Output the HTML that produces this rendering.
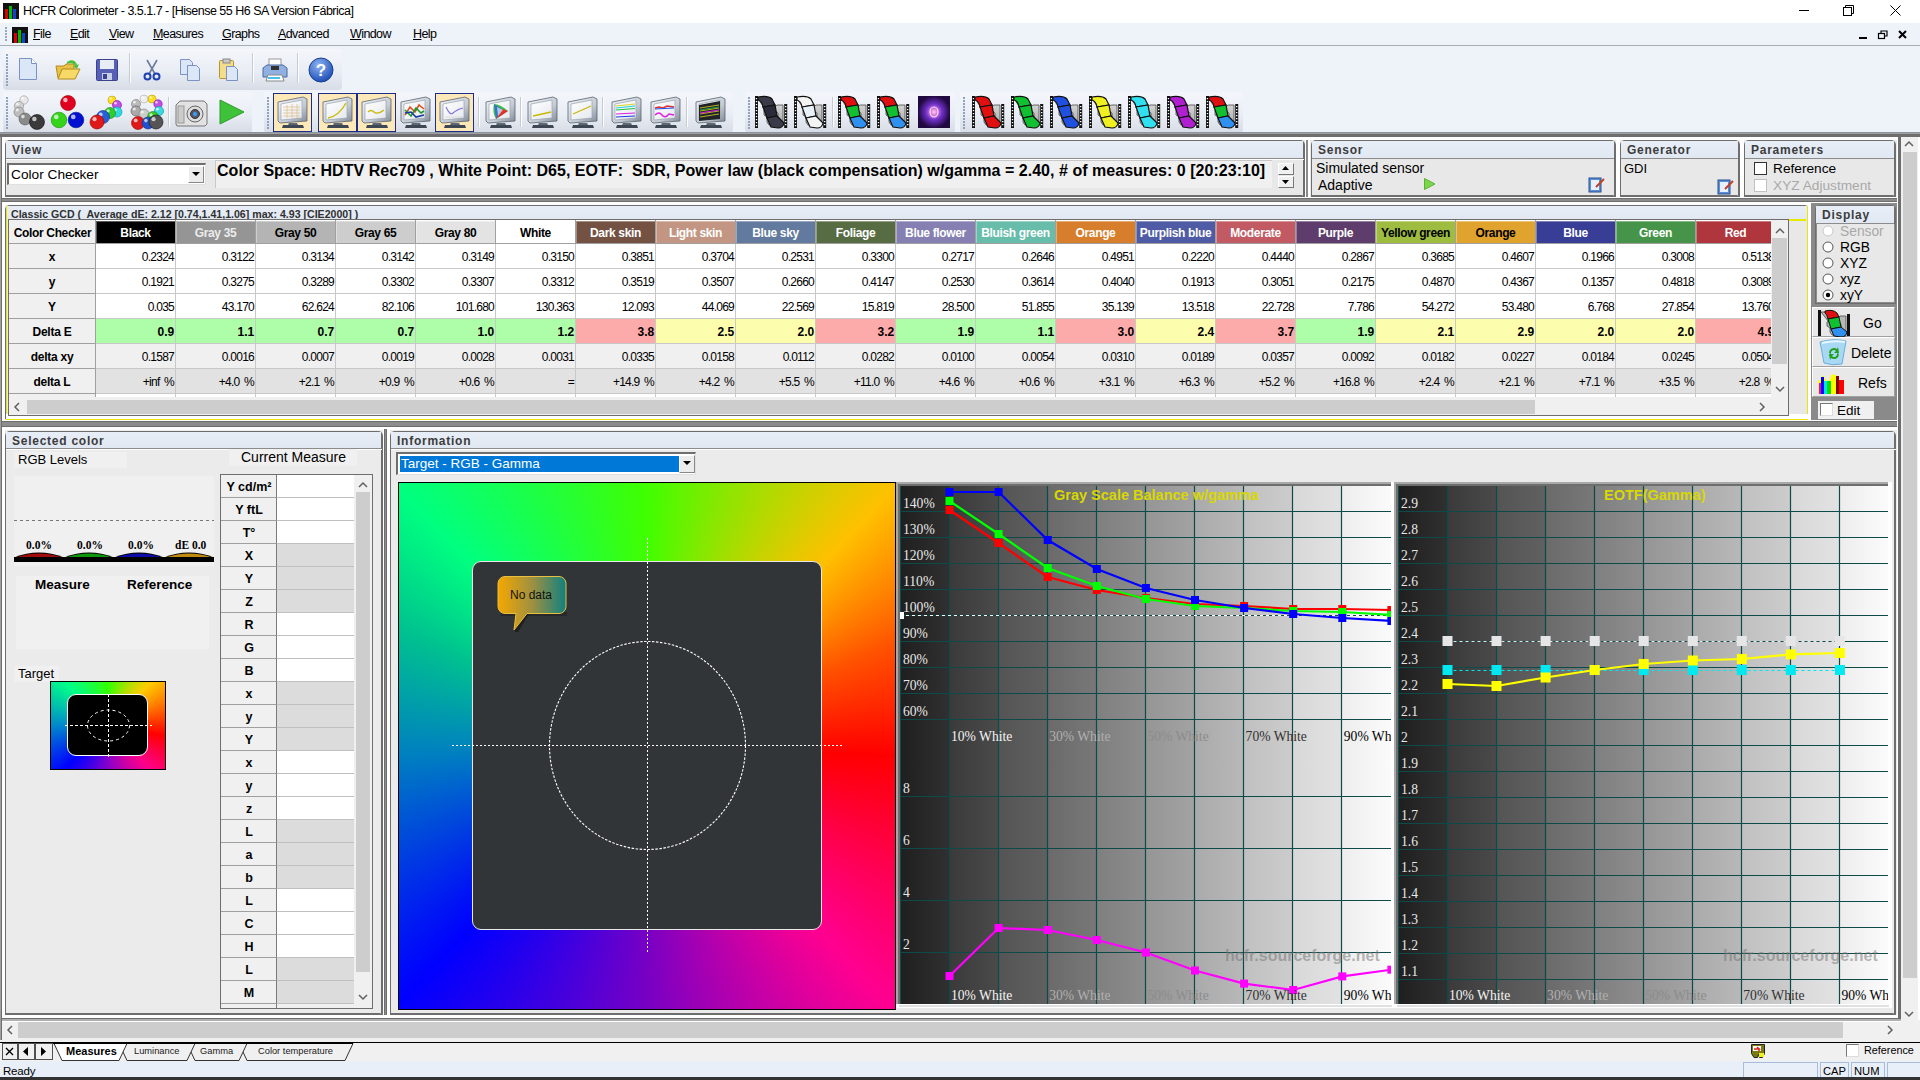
<!DOCTYPE html><html><head><meta charset="utf-8"><style>
*{margin:0;padding:0;box-sizing:border-box}
html,body{width:1920px;height:1080px;overflow:hidden;background:#f0f0f0;font-family:"Liberation Sans",sans-serif;font-size:12px;color:#000}
div{position:absolute}
.t{white-space:nowrap;line-height:1}
svg{position:absolute;overflow:visible}
</style></head><body><div style="left:0px;top:0px;width:1920px;height:23px;background:#fff"></div>
<svg style="left:3px;top:3px" width="16" height="16"><defs><linearGradient id="ig3" x1="0" y1="0" x2="0" y2="1"><stop offset="0" stop-color="#000"/><stop offset="1" stop-color="#333"/></linearGradient></defs><rect x="0" y="0" width="16" height="16" fill="#111"/><rect x="2" y="6" width="3" height="10" fill="#d00"/><rect x="6" y="3" width="3" height="13" fill="#0b0"/><rect x="10" y="6" width="3" height="10" fill="#14c"/></svg>
<div class="t" style="left:23px;top:5px;font-size:12.5px;letter-spacing:-0.5px;color:#000">HCFR Colorimeter - 3.5.1.7 - [Hisense 55 H6 SA Version Fábrica]</div>
<div style="left:1799px;top:10px;width:10px;height:1px;background:#000"></div>
<svg style="left:1843px;top:5px" width="12" height="12"><rect x="0.5" y="2.5" width="8" height="8" fill="none" stroke="#000"/><path d="M2.5 2.5V0.5h8v8h-2" fill="none" stroke="#000"/></svg>
<svg style="left:1890px;top:5px" width="11" height="11"><path d="M0.5 0.5L10.5 10.5M10.5 0.5L0.5 10.5" stroke="#000" stroke-width="1"/></svg>
<div style="left:0px;top:23px;width:1920px;height:22px;background:#eef2f9"></div>
<div style="left:0px;top:45px;width:1920px;height:1px;background:#a9adb3"></div>
<div style="left:5px;top:27px;width:2px;height:2px;background:#9aa6bb"></div>
<div style="left:5px;top:30px;width:2px;height:2px;background:#9aa6bb"></div>
<div style="left:5px;top:33px;width:2px;height:2px;background:#9aa6bb"></div>
<div style="left:5px;top:36px;width:2px;height:2px;background:#9aa6bb"></div>
<div style="left:5px;top:39px;width:2px;height:2px;background:#9aa6bb"></div>
<svg style="left:12px;top:27px" width="16" height="16"><defs><linearGradient id="ig12" x1="0" y1="0" x2="0" y2="1"><stop offset="0" stop-color="#000"/><stop offset="1" stop-color="#333"/></linearGradient></defs><rect x="0" y="0" width="16" height="16" fill="#111"/><rect x="2" y="6" width="3" height="10" fill="#d00"/><rect x="6" y="3" width="3" height="13" fill="#0b0"/><rect x="10" y="6" width="3" height="10" fill="#14c"/></svg>
<div class="t" style="left:33px;top:28px;font-size:12.5px;letter-spacing:-0.6px"><u>F</u>ile</div>
<div class="t" style="left:70px;top:28px;font-size:12.5px;letter-spacing:-0.6px"><u>E</u>dit</div>
<div class="t" style="left:109px;top:28px;font-size:12.5px;letter-spacing:-0.6px"><u>V</u>iew</div>
<div class="t" style="left:153px;top:28px;font-size:12.5px;letter-spacing:-0.6px"><u>M</u>easures</div>
<div class="t" style="left:222px;top:28px;font-size:12.5px;letter-spacing:-0.6px"><u>G</u>raphs</div>
<div class="t" style="left:278px;top:28px;font-size:12.5px;letter-spacing:-0.6px"><u>A</u>dvanced</div>
<div class="t" style="left:350px;top:28px;font-size:12.5px;letter-spacing:-0.6px"><u>W</u>indow</div>
<div class="t" style="left:413px;top:28px;font-size:12.5px;letter-spacing:-0.6px"><u>H</u>elp</div>
<div style="left:1859px;top:37px;width:8px;height:2px;background:#000"></div>
<svg style="left:1878px;top:30px" width="10" height="10"><rect x="0.5" y="3.5" width="6" height="5" fill="none" stroke="#000" stroke-width="1.2"/><path d="M3 3V1h6v5H7" fill="none" stroke="#000" stroke-width="1.2"/></svg>
<svg style="left:1898px;top:30px" width="9" height="9"><path d="M1 1L8 8M8 1L1 8" stroke="#000" stroke-width="2"/></svg>
<div style="left:0px;top:46px;width:1920px;height:87px;background:#eef2f9"></div>
<div style="left:3px;top:49px;width:339px;height:41px;background:linear-gradient(#f4f6fb 0%,#e9edf4 55%,#d7dce6 100%);border-radius:4px"></div>
<div style="left:6px;top:54px;width:2px;height:2px;background:#8ea3c3"></div>
<div style="left:6px;top:57px;width:2px;height:2px;background:#8ea3c3"></div>
<div style="left:6px;top:60px;width:2px;height:2px;background:#8ea3c3"></div>
<div style="left:6px;top:63px;width:2px;height:2px;background:#8ea3c3"></div>
<div style="left:6px;top:66px;width:2px;height:2px;background:#8ea3c3"></div>
<div style="left:6px;top:69px;width:2px;height:2px;background:#8ea3c3"></div>
<div style="left:6px;top:72px;width:2px;height:2px;background:#8ea3c3"></div>
<div style="left:6px;top:75px;width:2px;height:2px;background:#8ea3c3"></div>
<div style="left:6px;top:78px;width:2px;height:2px;background:#8ea3c3"></div>
<div style="left:6px;top:81px;width:2px;height:2px;background:#8ea3c3"></div>
<div style="left:6px;top:84px;width:2px;height:2px;background:#8ea3c3"></div>
<div style="left:3px;top:92px;width:249px;height:41px;background:linear-gradient(#f4f6fb 0%,#e9edf4 55%,#d7dce6 100%);border-radius:4px"></div>
<div style="left:6px;top:97px;width:2px;height:2px;background:#8ea3c3"></div>
<div style="left:6px;top:100px;width:2px;height:2px;background:#8ea3c3"></div>
<div style="left:6px;top:103px;width:2px;height:2px;background:#8ea3c3"></div>
<div style="left:6px;top:106px;width:2px;height:2px;background:#8ea3c3"></div>
<div style="left:6px;top:109px;width:2px;height:2px;background:#8ea3c3"></div>
<div style="left:6px;top:112px;width:2px;height:2px;background:#8ea3c3"></div>
<div style="left:6px;top:115px;width:2px;height:2px;background:#8ea3c3"></div>
<div style="left:6px;top:118px;width:2px;height:2px;background:#8ea3c3"></div>
<div style="left:6px;top:121px;width:2px;height:2px;background:#8ea3c3"></div>
<div style="left:6px;top:124px;width:2px;height:2px;background:#8ea3c3"></div>
<div style="left:6px;top:127px;width:2px;height:2px;background:#8ea3c3"></div>
<div style="left:264px;top:92px;width:469px;height:41px;background:linear-gradient(#f4f6fb 0%,#e9edf4 55%,#d7dce6 100%);border-radius:4px"></div>
<div style="left:267px;top:97px;width:2px;height:2px;background:#8ea3c3"></div>
<div style="left:267px;top:100px;width:2px;height:2px;background:#8ea3c3"></div>
<div style="left:267px;top:103px;width:2px;height:2px;background:#8ea3c3"></div>
<div style="left:267px;top:106px;width:2px;height:2px;background:#8ea3c3"></div>
<div style="left:267px;top:109px;width:2px;height:2px;background:#8ea3c3"></div>
<div style="left:267px;top:112px;width:2px;height:2px;background:#8ea3c3"></div>
<div style="left:267px;top:115px;width:2px;height:2px;background:#8ea3c3"></div>
<div style="left:267px;top:118px;width:2px;height:2px;background:#8ea3c3"></div>
<div style="left:267px;top:121px;width:2px;height:2px;background:#8ea3c3"></div>
<div style="left:267px;top:124px;width:2px;height:2px;background:#8ea3c3"></div>
<div style="left:267px;top:127px;width:2px;height:2px;background:#8ea3c3"></div>
<div style="left:745px;top:92px;width:210px;height:41px;background:linear-gradient(#f4f6fb 0%,#e9edf4 55%,#d7dce6 100%);border-radius:4px"></div>
<div style="left:748px;top:97px;width:2px;height:2px;background:#8ea3c3"></div>
<div style="left:748px;top:100px;width:2px;height:2px;background:#8ea3c3"></div>
<div style="left:748px;top:103px;width:2px;height:2px;background:#8ea3c3"></div>
<div style="left:748px;top:106px;width:2px;height:2px;background:#8ea3c3"></div>
<div style="left:748px;top:109px;width:2px;height:2px;background:#8ea3c3"></div>
<div style="left:748px;top:112px;width:2px;height:2px;background:#8ea3c3"></div>
<div style="left:748px;top:115px;width:2px;height:2px;background:#8ea3c3"></div>
<div style="left:748px;top:118px;width:2px;height:2px;background:#8ea3c3"></div>
<div style="left:748px;top:121px;width:2px;height:2px;background:#8ea3c3"></div>
<div style="left:748px;top:124px;width:2px;height:2px;background:#8ea3c3"></div>
<div style="left:748px;top:127px;width:2px;height:2px;background:#8ea3c3"></div>
<div style="left:960px;top:92px;width:283px;height:41px;background:linear-gradient(#f4f6fb 0%,#e9edf4 55%,#d7dce6 100%);border-radius:4px"></div>
<div style="left:963px;top:97px;width:2px;height:2px;background:#8ea3c3"></div>
<div style="left:963px;top:100px;width:2px;height:2px;background:#8ea3c3"></div>
<div style="left:963px;top:103px;width:2px;height:2px;background:#8ea3c3"></div>
<div style="left:963px;top:106px;width:2px;height:2px;background:#8ea3c3"></div>
<div style="left:963px;top:109px;width:2px;height:2px;background:#8ea3c3"></div>
<div style="left:963px;top:112px;width:2px;height:2px;background:#8ea3c3"></div>
<div style="left:963px;top:115px;width:2px;height:2px;background:#8ea3c3"></div>
<div style="left:963px;top:118px;width:2px;height:2px;background:#8ea3c3"></div>
<div style="left:963px;top:121px;width:2px;height:2px;background:#8ea3c3"></div>
<div style="left:963px;top:124px;width:2px;height:2px;background:#8ea3c3"></div>
<div style="left:963px;top:127px;width:2px;height:2px;background:#8ea3c3"></div>
<svg style="left:18px;top:57px" width="20" height="24"><path d="M1.5 1.5h12l5 5v16h-17z" fill="#dbe6f7" stroke="#7b93c4"/><path d="M13.5 1.5v5h5" fill="#fff" stroke="#7b93c4"/></svg>
<svg style="left:55px;top:58px" width="26" height="24"><path d="M1 8h8l2-2h8v14H3z" fill="#e9c24a" stroke="#b58a1a"/><path d="M3 21l4-10h18l-5 10z" fill="#f7d967" stroke="#b58a1a"/><path d="M12 4c4-3 9-2 10 3l2-1-2 5-4-3 2 0c-1-3-5-4-8-2z" fill="#4fbf3a"/></svg>
<svg style="left:96px;top:59px" width="22" height="22"><rect x="0.5" y="0.5" width="21" height="21" rx="1" fill="#5760b5" stroke="#3b438f"/><rect x="4" y="1" width="14" height="9" fill="#e8ecf4"/><rect x="6" y="14" width="10" height="7" fill="#c8d0e8"/><rect x="7" y="15" width="4" height="5" fill="#3b438f"/></svg>
<div style="left:129px;top:53px;width:1px;height:30px;background:#c5cad3"></div>
<div style="left:130px;top:53px;width:1px;height:30px;background:#fff"></div>
<svg style="left:143px;top:59px" width="18" height="22"><path d="M4 1l8 14M14 1L6 15" stroke="#6d7ba0" stroke-width="1.6"/><circle cx="4.5" cy="17.5" r="3" fill="none" stroke="#1e40b0" stroke-width="2"/><circle cx="13.5" cy="17.5" r="3" fill="none" stroke="#1e40b0" stroke-width="2"/></svg>
<svg style="left:179px;top:58px" width="22" height="24"><path d="M1.5 1.5h9l3 3v12h-12z" fill="#dbe6f7" stroke="#7b93c4"/><path d="M8.5 7.5h9l3 3v12h-12z" fill="#dbe6f7" stroke="#7b93c4"/></svg>
<svg style="left:218px;top:58px" width="22" height="24"><rect x="1.5" y="2.5" width="14" height="18" rx="1" fill="#f3dc8a" stroke="#b8952a"/><rect x="5" y="1" width="7" height="4" fill="#c9c9c9" stroke="#888"/><path d="M8.5 8.5h8l3 3v11h-11z" fill="#dbe6f7" stroke="#7b93c4"/></svg>
<div style="left:252px;top:53px;width:1px;height:30px;background:#c5cad3"></div>
<div style="left:253px;top:53px;width:1px;height:30px;background:#fff"></div>
<svg style="left:262px;top:58px" width="26" height="24"><rect x="7" y="1" width="12" height="8" fill="#fff" stroke="#999"/><path d="M1 10l4-3h16l4 3v9H1z" fill="#8fb0e0" stroke="#4a6aa0"/><rect x="9" y="8" width="8" height="4" fill="#333"/><path d="M6 17h14l2 6H4z" fill="#fff" stroke="#888"/><rect x="6" y="19" width="12" height="2" fill="#4ac0f0"/></svg>
<div style="left:297px;top:53px;width:1px;height:30px;background:#c5cad3"></div>
<div style="left:298px;top:53px;width:1px;height:30px;background:#fff"></div>
<svg style="left:308px;top:57px" width="26" height="26"><defs><radialGradient id="hg" cx="0.4" cy="0.3" r="0.7"><stop offset="0" stop-color="#8fb4f2"/><stop offset="1" stop-color="#1f4fb8"/></radialGradient></defs><circle cx="13" cy="13" r="12" fill="url(#hg)" stroke="#1a3f8f"/><text x="13" y="19" text-anchor="middle" font-family="Liberation Sans" font-weight="bold" font-size="17" fill="#fff">?</text></svg>
<svg style="left:12px;top:95px" width="36" height="36"><circle cx="12" cy="5" r="4.2" fill="#e8e8e8" stroke="#999" stroke-width="0.6"/><circle cx="10.53" cy="3.32" r="1.26" fill="#fff" opacity="0.7"/><circle cx="7" cy="11" r="4.6" fill="#d0d0d0" stroke="#888" stroke-width="0.6"/><circle cx="5.390000000000001" cy="9.16" r="1.38" fill="#fff" opacity="0.7"/><circle cx="7" cy="17" r="5" fill="#bdbdbd" stroke="#777" stroke-width="0.6"/><circle cx="5.25" cy="15.0" r="1.5" fill="#fff" opacity="0.7"/><circle cx="13" cy="24" r="6" fill="#8a8a8a" stroke="#555" stroke-width="0.6"/><circle cx="10.9" cy="21.6" r="1.7999999999999998" fill="#fff" opacity="0.7"/><circle cx="25" cy="27" r="7.5" fill="#3a3a3a" stroke="#111" stroke-width="0.6"/><circle cx="22.375" cy="24.0" r="2.25" fill="#fff" opacity="0.7"/></svg>
<svg style="left:51px;top:95px" width="36" height="36"><circle cx="17" cy="8" r="7.5" fill="#e00020" stroke="#900" stroke-width="0.6"/><circle cx="14.375" cy="5.0" r="2.25" fill="#fff" opacity="0.7"/><circle cx="8" cy="25" r="7.8" fill="#33d41a" stroke="#1a8a10" stroke-width="0.6"/><circle cx="5.27" cy="21.88" r="2.34" fill="#fff" opacity="0.7"/><circle cx="25" cy="25" r="7.8" fill="#0010d0" stroke="#001090" stroke-width="0.6"/><circle cx="22.27" cy="21.88" r="2.34" fill="#fff" opacity="0.7"/></svg>
<svg style="left:90px;top:95px" width="36" height="36"><circle cx="22" cy="5" r="4" fill="#ffe020" stroke="#b90" stroke-width="0.6"/><circle cx="20.6" cy="3.4" r="1.2" fill="#fff" opacity="0.7"/><circle cx="27" cy="10" r="4.5" fill="#c050e0" stroke="#80c" stroke-width="0.6"/><circle cx="25.425" cy="8.2" r="1.3499999999999999" fill="#fff" opacity="0.7"/><circle cx="27" cy="17" r="5" fill="#30d8e0" stroke="#099" stroke-width="0.6"/><circle cx="25.25" cy="15.0" r="1.5" fill="#fff" opacity="0.7"/><circle cx="20" cy="18" r="5.5" fill="#30cc2a" stroke="#181" stroke-width="0.6"/><circle cx="18.075" cy="15.8" r="1.65" fill="#fff" opacity="0.7"/><circle cx="13" cy="22" r="6.5" fill="#2860d8" stroke="#138" stroke-width="0.6"/><circle cx="10.725" cy="19.4" r="1.95" fill="#fff" opacity="0.7"/><circle cx="7" cy="27" r="7" fill="#e01818" stroke="#900" stroke-width="0.6"/><circle cx="4.550000000000001" cy="24.2" r="2.1" fill="#fff" opacity="0.7"/></svg>
<svg style="left:129px;top:95px" width="36" height="36"><circle cx="15" cy="4" r="4" fill="#eee" stroke="#aaa" stroke-width="0.6"/><circle cx="13.6" cy="2.4" r="1.2" fill="#fff" opacity="0.7"/><circle cx="23" cy="4" r="4" fill="#ffe020" stroke="#b90" stroke-width="0.6"/><circle cx="21.6" cy="2.4" r="1.2" fill="#fff" opacity="0.7"/><circle cx="29" cy="9" r="4.2" fill="#c050e0" stroke="#80c" stroke-width="0.6"/><circle cx="27.53" cy="7.32" r="1.26" fill="#fff" opacity="0.7"/><circle cx="7" cy="9" r="4.5" fill="#bbb" stroke="#777" stroke-width="0.6"/><circle cx="5.425" cy="7.2" r="1.3499999999999999" fill="#fff" opacity="0.7"/><circle cx="30" cy="16" r="4.6" fill="#3ed8e0" stroke="#099" stroke-width="0.6"/><circle cx="28.39" cy="14.16" r="1.38" fill="#fff" opacity="0.7"/><circle cx="7" cy="16" r="5" fill="#aaa" stroke="#555" stroke-width="0.6"/><circle cx="5.25" cy="14.0" r="1.5" fill="#fff" opacity="0.7"/><circle cx="15" cy="19" r="5" fill="#ccc" stroke="#777" stroke-width="0.6"/><circle cx="13.25" cy="17.0" r="1.5" fill="#fff" opacity="0.7"/><circle cx="24" cy="22" r="5.5" fill="#3dcc2a" stroke="#181" stroke-width="0.6"/><circle cx="22.075" cy="19.8" r="1.65" fill="#fff" opacity="0.7"/><circle cx="9" cy="28" r="6.5" fill="#e01818" stroke="#900" stroke-width="0.6"/><circle cx="6.725" cy="25.4" r="1.95" fill="#fff" opacity="0.7"/><circle cx="19" cy="28" r="6" fill="#2050d0" stroke="#138" stroke-width="0.6"/><circle cx="16.9" cy="25.6" r="1.7999999999999998" fill="#fff" opacity="0.7"/><circle cx="27" cy="27" r="7" fill="#555" stroke="#111" stroke-width="0.6"/><circle cx="24.55" cy="24.2" r="2.1" fill="#fff" opacity="0.7"/></svg>
<div style="left:168px;top:97px;width:1px;height:30px;background:#c5cad3"></div>
<div style="left:169px;top:97px;width:1px;height:30px;background:#fff"></div>
<svg style="left:174px;top:98px" width="34" height="30"><path d="M2 7l4-4h24l3 3v20l-2 2H3l-1-2z" fill="#e2e2e2" stroke="#777"/><rect x="4" y="8" width="6" height="17" fill="#ccc" stroke="#999"/><circle cx="21" cy="16" r="8" fill="#ddd" stroke="#666"/><circle cx="21" cy="16" r="4.5" fill="#556" stroke="#333"/><circle cx="21" cy="16" r="2" fill="#3aa0ff"/></svg>
<svg style="left:218px;top:98px" width="28" height="28"><path d="M2 2L26 14L2 26z" fill="#3fc23a" stroke="#2d9a2a"/></svg>
<svg width="0" height="0" style="left:0;top:0"><defs><linearGradient id="bez" x1="0" y1="0" x2="1" y2="1"><stop offset="0" stop-color="#f2f4f7"/><stop offset="0.6" stop-color="#c5ccd5"/><stop offset="1" stop-color="#7d8894"/></linearGradient><linearGradient id="scr" x1="0" y1="0" x2="1" y2="1"><stop offset="0" stop-color="#ffffff"/><stop offset="1" stop-color="#e4e8ee"/></linearGradient><linearGradient id="filmg" x1="0" y1="0" x2="0" y2="1"><stop offset="0" stop-color="#e0e0e0"/><stop offset="1" stop-color="#a8a8a8"/></linearGradient></defs></svg>
<div style="left:273px;top:93px;width:39px;height:39px;background:#fde8b8;border:1px solid #1f2d8a"></div>
<svg style="left:276px;top:95px" width="34" height="34"><path d="M2 7L27 2L31 4V26L4 28L2 26z" fill="url(#bez)" stroke="#5a6470" stroke-width="0.8"/><path d="M5 9L26 5V23L5 25z" fill="url(#scr)" stroke="#8e98a4" stroke-width="0.6"/><g transform="translate(0,1)"><path d="M7 11h17M7 14h17M7 17h17M7 20h17M11 9v13M16 8v14M21 8v14" stroke="#e0c090" stroke-width="0.8"/></g><path d="M13 28H21L22 30H12z" fill="#5e6874"/><path d="M7 30H27L28 33H6z" fill="#3e4854"/></svg>
<div style="left:318px;top:93px;width:39px;height:39px;background:#fde8b8;border:1px solid #1f2d8a"></div>
<svg style="left:321px;top:95px" width="34" height="34"><path d="M2 7L27 2L31 4V26L4 28L2 26z" fill="url(#bez)" stroke="#5a6470" stroke-width="0.8"/><path d="M5 9L26 5V23L5 25z" fill="url(#scr)" stroke="#8e98a4" stroke-width="0.6"/><g transform="translate(0,1)"><path d="M7 22Q18 20 25 7" stroke="#c8b800" fill="none" stroke-width="1.3"/></g><path d="M13 28H21L22 30H12z" fill="#5e6874"/><path d="M7 30H27L28 33H6z" fill="#3e4854"/></svg>
<div style="left:357px;top:93px;width:39px;height:39px;background:#fde8b8;border:1px solid #1f2d8a"></div>
<svg style="left:360px;top:95px" width="34" height="34"><path d="M2 7L27 2L31 4V26L4 28L2 26z" fill="url(#bez)" stroke="#5a6470" stroke-width="0.8"/><path d="M5 9L26 5V23L5 25z" fill="url(#scr)" stroke="#8e98a4" stroke-width="0.6"/><g transform="translate(0,1)"><path d="M8 16Q11 13 14 16T24 14" stroke="#c8b800" fill="none" stroke-width="1.3"/></g><path d="M13 28H21L22 30H12z" fill="#5e6874"/><path d="M7 30H27L28 33H6z" fill="#3e4854"/></svg>
<svg style="left:399px;top:95px" width="34" height="34"><path d="M2 7L27 2L31 4V26L4 28L2 26z" fill="url(#bez)" stroke="#5a6470" stroke-width="0.8"/><path d="M5 9L26 5V23L5 25z" fill="url(#scr)" stroke="#8e98a4" stroke-width="0.6"/><g transform="translate(0,1)"><path d="M6 19L11 11L16 16L20 9L25 13" stroke="#e05020" fill="none" stroke-width="1.6"/><path d="M6 14L12 20L17 12L22 17L25 15" stroke="#1a9a2a" fill="none" stroke-width="1.6"/><path d="M6 17L12 16L17 21L25 19" stroke="#1a3aa0" fill="none" stroke-width="1.6"/></g><path d="M13 28H21L22 30H12z" fill="#5e6874"/><path d="M7 30H27L28 33H6z" fill="#3e4854"/></svg>
<div style="left:435px;top:93px;width:39px;height:39px;background:#fde8b8;border:1px solid #1f2d8a"></div>
<svg style="left:438px;top:95px" width="34" height="34"><path d="M2 7L27 2L31 4V26L4 28L2 26z" fill="url(#bez)" stroke="#5a6470" stroke-width="0.8"/><path d="M5 9L26 5V23L5 25z" fill="url(#scr)" stroke="#8e98a4" stroke-width="0.6"/><g transform="translate(0,1)"><path d="M8 11Q12 20 15 17T25 12" stroke="#8070e0" fill="none" stroke-width="1.1"/><path d="M7 21H25" stroke="#ccc" stroke-width="0.6"/></g><path d="M13 28H21L22 30H12z" fill="#5e6874"/><path d="M7 30H27L28 33H6z" fill="#3e4854"/></svg>
<div style="left:478px;top:97px;width:1px;height:30px;background:#c5cad3"></div>
<div style="left:479px;top:97px;width:1px;height:30px;background:#fff"></div>
<svg style="left:484px;top:95px" width="34" height="34"><path d="M2 7L27 2L31 4V26L4 28L2 26z" fill="url(#bez)" stroke="#5a6470" stroke-width="0.8"/><path d="M5 9L26 5V23L5 25z" fill="url(#scr)" stroke="#8e98a4" stroke-width="0.6"/><g transform="translate(0,1)"><path d="M10 8Q8 16 12 23L24 15Q16 8 10 8z" fill="#40c040"/><path d="M12 23L24 15L18 13z" fill="#e03030"/><path d="M10 8L18 13L12 23z" fill="#3060f0" opacity="0.8"/><path d="M13 11L19 14L14 20z" fill="#fff" opacity="0.6"/></g><path d="M13 28H21L22 30H12z" fill="#5e6874"/><path d="M7 30H27L28 33H6z" fill="#3e4854"/></svg>
<div style="left:520px;top:97px;width:1px;height:30px;background:#c5cad3"></div>
<div style="left:521px;top:97px;width:1px;height:30px;background:#fff"></div>
<svg style="left:526px;top:95px" width="34" height="34"><path d="M2 7L27 2L31 4V26L4 28L2 26z" fill="url(#bez)" stroke="#5a6470" stroke-width="0.8"/><path d="M5 9L26 5V23L5 25z" fill="url(#scr)" stroke="#8e98a4" stroke-width="0.6"/><g transform="translate(0,1)"><path d="M7 20L25 16" stroke="#c8b800" stroke-width="1.3"/></g><path d="M13 28H21L22 30H12z" fill="#5e6874"/><path d="M7 30H27L28 33H6z" fill="#3e4854"/></svg>
<svg style="left:566px;top:95px" width="34" height="34"><path d="M2 7L27 2L31 4V26L4 28L2 26z" fill="url(#bez)" stroke="#5a6470" stroke-width="0.8"/><path d="M5 9L26 5V23L5 25z" fill="url(#scr)" stroke="#8e98a4" stroke-width="0.6"/><g transform="translate(0,1)"><path d="M7 18L25 10" stroke="#c8b800" stroke-width="1.3"/></g><path d="M13 28H21L22 30H12z" fill="#5e6874"/><path d="M7 30H27L28 33H6z" fill="#3e4854"/></svg>
<div style="left:602px;top:97px;width:1px;height:30px;background:#c5cad3"></div>
<div style="left:603px;top:97px;width:1px;height:30px;background:#fff"></div>
<svg style="left:610px;top:95px" width="34" height="34"><path d="M2 7L27 2L31 4V26L4 28L2 26z" fill="url(#bez)" stroke="#5a6470" stroke-width="0.8"/><path d="M5 9L26 5V23L5 25z" fill="url(#scr)" stroke="#8e98a4" stroke-width="0.6"/><g transform="translate(0,1)"><path d="M6 10L25 8" stroke="#e0d020" stroke-width="1.2"/><path d="M6 12L25 10" stroke="#20d0e0" stroke-width="1.2"/><path d="M6 14L25 12.5" stroke="#20c040" stroke-width="1.2"/><path d="M6 18L25 17" stroke="#e020e0" stroke-width="1.2"/><path d="M6 21L25 20" stroke="#2040e0" stroke-width="1.2"/></g><path d="M13 28H21L22 30H12z" fill="#5e6874"/><path d="M7 30H27L28 33H6z" fill="#3e4854"/></svg>
<svg style="left:649px;top:95px" width="34" height="34"><path d="M2 7L27 2L31 4V26L4 28L2 26z" fill="url(#bez)" stroke="#5a6470" stroke-width="0.8"/><path d="M5 9L26 5V23L5 25z" fill="url(#scr)" stroke="#8e98a4" stroke-width="0.6"/><g transform="translate(0,1)"><path d="M6 12L10 11L14 12L18 10L25 11" stroke="#e03030" fill="none" stroke-width="1.5"/><path d="M6 13L25 12" stroke="#2050f0" stroke-width="1.2"/><path d="M6 19Q10 15 13 19T20 18L25 19" stroke="#e020e0" fill="none" stroke-width="1.4"/></g><path d="M13 28H21L22 30H12z" fill="#5e6874"/><path d="M7 30H27L28 33H6z" fill="#3e4854"/></svg>
<div style="left:686px;top:97px;width:1px;height:30px;background:#c5cad3"></div>
<div style="left:687px;top:97px;width:1px;height:30px;background:#fff"></div>
<svg style="left:694px;top:95px" width="34" height="34"><path d="M2 7L27 2L31 4V26L4 28L2 26z" fill="url(#bez)" stroke="#5a6470" stroke-width="0.8"/><path d="M5 9L26 5V23L5 25z" fill="url(#scr)" stroke="#8e98a4" stroke-width="0.6"/><g transform="translate(0,1)"><path d="M5 9L26 5V23L5 25z" fill="#202428"/><path d="M6 12L25 9M6 15L25 12M6 18L25 15M6 21L25 18" stroke="#c8c020" stroke-width="0.9"/><path d="M6 17L25 14" stroke="#e020e0" stroke-width="1"/><path d="M6 14L25 11" stroke="#20a040" stroke-width="1"/></g><path d="M13 28H21L22 30H12z" fill="#5e6874"/><path d="M7 30H27L28 33H6z" fill="#3e4854"/></svg>
<svg style="left:755px;top:96px" width="33" height="33"><rect x="0" y="0" width="3" height="32" fill="#111"/><rect x="0.8" y="2" width="1.4" height="1.2" fill="#fff"/><rect x="0.8" y="5" width="1.4" height="1.2" fill="#fff"/><rect x="0.8" y="8" width="1.4" height="1.2" fill="#fff"/><rect x="0.8" y="11" width="1.4" height="1.2" fill="#fff"/><rect x="0.8" y="14" width="1.4" height="1.2" fill="#fff"/><rect x="0.8" y="17" width="1.4" height="1.2" fill="#fff"/><rect x="0.8" y="20" width="1.4" height="1.2" fill="#fff"/><rect x="0.8" y="23" width="1.4" height="1.2" fill="#fff"/><rect x="0.8" y="26" width="1.4" height="1.2" fill="#fff"/><rect x="0.8" y="29" width="1.4" height="1.2" fill="#fff"/><rect x="29.2" y="8" width="3" height="24" fill="#111"/><rect x="30" y="10" width="1.4" height="1.2" fill="#fff"/><rect x="30" y="13" width="1.4" height="1.2" fill="#fff"/><rect x="30" y="16" width="1.4" height="1.2" fill="#fff"/><rect x="30" y="19" width="1.4" height="1.2" fill="#fff"/><rect x="30" y="22" width="1.4" height="1.2" fill="#fff"/><rect x="30" y="25" width="1.4" height="1.2" fill="#fff"/><rect x="30" y="28" width="1.4" height="1.2" fill="#fff"/><path d="M3 3H10L12 6V12L9 14V19L12 21V26L14 29L28 30V9H22L20 11V15L23 17V22L18 24Z" fill="url(#filmg)" stroke="#333" stroke-width="0.7"/><path d="M3 1Q13 -1 17 3L20 9L8 11Q7 5 3 4Z" fill="#3a3a48" stroke="#111" stroke-width="1.2"/><path d="M8 11L20 9L22 20L12 22Z" fill="#2a2a38" stroke="#111" stroke-width="1.2"/><path d="M12 22L22 20L29 27Q28 32 23 32L16 31Z" fill="#3a3a48" stroke="#111" stroke-width="1.2"/></svg>
<svg style="left:794px;top:96px" width="33" height="33"><rect x="0" y="0" width="3" height="32" fill="#111"/><rect x="0.8" y="2" width="1.4" height="1.2" fill="#fff"/><rect x="0.8" y="5" width="1.4" height="1.2" fill="#fff"/><rect x="0.8" y="8" width="1.4" height="1.2" fill="#fff"/><rect x="0.8" y="11" width="1.4" height="1.2" fill="#fff"/><rect x="0.8" y="14" width="1.4" height="1.2" fill="#fff"/><rect x="0.8" y="17" width="1.4" height="1.2" fill="#fff"/><rect x="0.8" y="20" width="1.4" height="1.2" fill="#fff"/><rect x="0.8" y="23" width="1.4" height="1.2" fill="#fff"/><rect x="0.8" y="26" width="1.4" height="1.2" fill="#fff"/><rect x="0.8" y="29" width="1.4" height="1.2" fill="#fff"/><rect x="29.2" y="8" width="3" height="24" fill="#111"/><rect x="30" y="10" width="1.4" height="1.2" fill="#fff"/><rect x="30" y="13" width="1.4" height="1.2" fill="#fff"/><rect x="30" y="16" width="1.4" height="1.2" fill="#fff"/><rect x="30" y="19" width="1.4" height="1.2" fill="#fff"/><rect x="30" y="22" width="1.4" height="1.2" fill="#fff"/><rect x="30" y="25" width="1.4" height="1.2" fill="#fff"/><rect x="30" y="28" width="1.4" height="1.2" fill="#fff"/><path d="M3 3H10L12 6V12L9 14V19L12 21V26L14 29L28 30V9H22L20 11V15L23 17V22L18 24Z" fill="url(#filmg)" stroke="#333" stroke-width="0.7"/><path d="M3 1Q13 -1 17 3L20 9L8 11Q7 5 3 4Z" fill="#f4f4f4" stroke="#111" stroke-width="1.2"/><path d="M8 11L20 9L22 20L12 22Z" fill="#e8f0f8" stroke="#111" stroke-width="1.2"/><path d="M12 22L22 20L29 27Q28 32 23 32L16 31Z" fill="#f4f4f4" stroke="#111" stroke-width="1.2"/></svg>
<div style="left:832px;top:97px;width:1px;height:30px;background:#c5cad3"></div>
<div style="left:833px;top:97px;width:1px;height:30px;background:#fff"></div>
<svg style="left:838px;top:96px" width="33" height="33"><rect x="0" y="0" width="3" height="32" fill="#111"/><rect x="0.8" y="2" width="1.4" height="1.2" fill="#fff"/><rect x="0.8" y="5" width="1.4" height="1.2" fill="#fff"/><rect x="0.8" y="8" width="1.4" height="1.2" fill="#fff"/><rect x="0.8" y="11" width="1.4" height="1.2" fill="#fff"/><rect x="0.8" y="14" width="1.4" height="1.2" fill="#fff"/><rect x="0.8" y="17" width="1.4" height="1.2" fill="#fff"/><rect x="0.8" y="20" width="1.4" height="1.2" fill="#fff"/><rect x="0.8" y="23" width="1.4" height="1.2" fill="#fff"/><rect x="0.8" y="26" width="1.4" height="1.2" fill="#fff"/><rect x="0.8" y="29" width="1.4" height="1.2" fill="#fff"/><rect x="29.2" y="8" width="3" height="24" fill="#111"/><rect x="30" y="10" width="1.4" height="1.2" fill="#fff"/><rect x="30" y="13" width="1.4" height="1.2" fill="#fff"/><rect x="30" y="16" width="1.4" height="1.2" fill="#fff"/><rect x="30" y="19" width="1.4" height="1.2" fill="#fff"/><rect x="30" y="22" width="1.4" height="1.2" fill="#fff"/><rect x="30" y="25" width="1.4" height="1.2" fill="#fff"/><rect x="30" y="28" width="1.4" height="1.2" fill="#fff"/><path d="M3 3H10L12 6V12L9 14V19L12 21V26L14 29L28 30V9H22L20 11V15L23 17V22L18 24Z" fill="url(#filmg)" stroke="#333" stroke-width="0.7"/><path d="M3 1Q13 -1 17 3L20 9L8 11Q7 5 3 4Z" fill="#e01010" stroke="#111" stroke-width="1.2"/><path d="M8 11L20 9L22 20L12 22Z" fill="#10c030" stroke="#111" stroke-width="1.2"/><path d="M12 22L22 20L29 27Q28 32 23 32L16 31Z" fill="#3090f0" stroke="#111" stroke-width="1.2"/></svg>
<svg style="left:877px;top:96px" width="33" height="33"><rect x="0" y="0" width="3" height="32" fill="#111"/><rect x="0.8" y="2" width="1.4" height="1.2" fill="#fff"/><rect x="0.8" y="5" width="1.4" height="1.2" fill="#fff"/><rect x="0.8" y="8" width="1.4" height="1.2" fill="#fff"/><rect x="0.8" y="11" width="1.4" height="1.2" fill="#fff"/><rect x="0.8" y="14" width="1.4" height="1.2" fill="#fff"/><rect x="0.8" y="17" width="1.4" height="1.2" fill="#fff"/><rect x="0.8" y="20" width="1.4" height="1.2" fill="#fff"/><rect x="0.8" y="23" width="1.4" height="1.2" fill="#fff"/><rect x="0.8" y="26" width="1.4" height="1.2" fill="#fff"/><rect x="0.8" y="29" width="1.4" height="1.2" fill="#fff"/><rect x="29.2" y="8" width="3" height="24" fill="#111"/><rect x="30" y="10" width="1.4" height="1.2" fill="#fff"/><rect x="30" y="13" width="1.4" height="1.2" fill="#fff"/><rect x="30" y="16" width="1.4" height="1.2" fill="#fff"/><rect x="30" y="19" width="1.4" height="1.2" fill="#fff"/><rect x="30" y="22" width="1.4" height="1.2" fill="#fff"/><rect x="30" y="25" width="1.4" height="1.2" fill="#fff"/><rect x="30" y="28" width="1.4" height="1.2" fill="#fff"/><path d="M3 3H10L12 6V12L9 14V19L12 21V26L14 29L28 30V9H22L20 11V15L23 17V22L18 24Z" fill="url(#filmg)" stroke="#333" stroke-width="0.7"/><path d="M3 1Q13 -1 17 3L20 9L8 11Q7 5 3 4Z" fill="#e01010" stroke="#111" stroke-width="1.2"/><path d="M8 11L20 9L22 20L12 22Z" fill="#10c030" stroke="#111" stroke-width="1.2"/><path d="M12 22L22 20L29 27Q28 32 23 32L16 31Z" fill="#3090f0" stroke="#111" stroke-width="1.2"/></svg>
<svg style="left:918px;top:96px" width="32" height="32"><defs><radialGradient id="pg"><stop offset="0" stop-color="#ffd0f0"/><stop offset="0.18" stop-color="#e080e0"/><stop offset="0.5" stop-color="#7030c8"/><stop offset="1" stop-color="#200840"/></radialGradient></defs><rect width="32" height="32" fill="url(#pg)"/><ellipse cx="16" cy="16" rx="4" ry="5" fill="none" stroke="#fff" stroke-width="1.2" opacity="0.8"/></svg>
<svg style="left:972px;top:96px" width="33" height="33"><rect x="0" y="0" width="3" height="32" fill="#111"/><rect x="0.8" y="2" width="1.4" height="1.2" fill="#fff"/><rect x="0.8" y="5" width="1.4" height="1.2" fill="#fff"/><rect x="0.8" y="8" width="1.4" height="1.2" fill="#fff"/><rect x="0.8" y="11" width="1.4" height="1.2" fill="#fff"/><rect x="0.8" y="14" width="1.4" height="1.2" fill="#fff"/><rect x="0.8" y="17" width="1.4" height="1.2" fill="#fff"/><rect x="0.8" y="20" width="1.4" height="1.2" fill="#fff"/><rect x="0.8" y="23" width="1.4" height="1.2" fill="#fff"/><rect x="0.8" y="26" width="1.4" height="1.2" fill="#fff"/><rect x="0.8" y="29" width="1.4" height="1.2" fill="#fff"/><rect x="29.2" y="8" width="3" height="24" fill="#111"/><rect x="30" y="10" width="1.4" height="1.2" fill="#fff"/><rect x="30" y="13" width="1.4" height="1.2" fill="#fff"/><rect x="30" y="16" width="1.4" height="1.2" fill="#fff"/><rect x="30" y="19" width="1.4" height="1.2" fill="#fff"/><rect x="30" y="22" width="1.4" height="1.2" fill="#fff"/><rect x="30" y="25" width="1.4" height="1.2" fill="#fff"/><rect x="30" y="28" width="1.4" height="1.2" fill="#fff"/><path d="M3 3H10L12 6V12L9 14V19L12 21V26L14 29L28 30V9H22L20 11V15L23 17V22L18 24Z" fill="url(#filmg)" stroke="#333" stroke-width="0.7"/><path d="M3 1Q13 -1 17 3L20 9L8 11Q7 5 3 4Z" fill="#e01010" stroke="#111" stroke-width="1.2"/><path d="M8 11L20 9L22 20L12 22Z" fill="#e01010" stroke="#111" stroke-width="1.2"/><path d="M12 22L22 20L29 27Q28 32 23 32L16 31Z" fill="#e01010" stroke="#111" stroke-width="1.2"/></svg>
<svg style="left:1011px;top:96px" width="33" height="33"><rect x="0" y="0" width="3" height="32" fill="#111"/><rect x="0.8" y="2" width="1.4" height="1.2" fill="#fff"/><rect x="0.8" y="5" width="1.4" height="1.2" fill="#fff"/><rect x="0.8" y="8" width="1.4" height="1.2" fill="#fff"/><rect x="0.8" y="11" width="1.4" height="1.2" fill="#fff"/><rect x="0.8" y="14" width="1.4" height="1.2" fill="#fff"/><rect x="0.8" y="17" width="1.4" height="1.2" fill="#fff"/><rect x="0.8" y="20" width="1.4" height="1.2" fill="#fff"/><rect x="0.8" y="23" width="1.4" height="1.2" fill="#fff"/><rect x="0.8" y="26" width="1.4" height="1.2" fill="#fff"/><rect x="0.8" y="29" width="1.4" height="1.2" fill="#fff"/><rect x="29.2" y="8" width="3" height="24" fill="#111"/><rect x="30" y="10" width="1.4" height="1.2" fill="#fff"/><rect x="30" y="13" width="1.4" height="1.2" fill="#fff"/><rect x="30" y="16" width="1.4" height="1.2" fill="#fff"/><rect x="30" y="19" width="1.4" height="1.2" fill="#fff"/><rect x="30" y="22" width="1.4" height="1.2" fill="#fff"/><rect x="30" y="25" width="1.4" height="1.2" fill="#fff"/><rect x="30" y="28" width="1.4" height="1.2" fill="#fff"/><path d="M3 3H10L12 6V12L9 14V19L12 21V26L14 29L28 30V9H22L20 11V15L23 17V22L18 24Z" fill="url(#filmg)" stroke="#333" stroke-width="0.7"/><path d="M3 1Q13 -1 17 3L20 9L8 11Q7 5 3 4Z" fill="#10c030" stroke="#111" stroke-width="1.2"/><path d="M8 11L20 9L22 20L12 22Z" fill="#10c030" stroke="#111" stroke-width="1.2"/><path d="M12 22L22 20L29 27Q28 32 23 32L16 31Z" fill="#10c030" stroke="#111" stroke-width="1.2"/></svg>
<svg style="left:1050px;top:96px" width="33" height="33"><rect x="0" y="0" width="3" height="32" fill="#111"/><rect x="0.8" y="2" width="1.4" height="1.2" fill="#fff"/><rect x="0.8" y="5" width="1.4" height="1.2" fill="#fff"/><rect x="0.8" y="8" width="1.4" height="1.2" fill="#fff"/><rect x="0.8" y="11" width="1.4" height="1.2" fill="#fff"/><rect x="0.8" y="14" width="1.4" height="1.2" fill="#fff"/><rect x="0.8" y="17" width="1.4" height="1.2" fill="#fff"/><rect x="0.8" y="20" width="1.4" height="1.2" fill="#fff"/><rect x="0.8" y="23" width="1.4" height="1.2" fill="#fff"/><rect x="0.8" y="26" width="1.4" height="1.2" fill="#fff"/><rect x="0.8" y="29" width="1.4" height="1.2" fill="#fff"/><rect x="29.2" y="8" width="3" height="24" fill="#111"/><rect x="30" y="10" width="1.4" height="1.2" fill="#fff"/><rect x="30" y="13" width="1.4" height="1.2" fill="#fff"/><rect x="30" y="16" width="1.4" height="1.2" fill="#fff"/><rect x="30" y="19" width="1.4" height="1.2" fill="#fff"/><rect x="30" y="22" width="1.4" height="1.2" fill="#fff"/><rect x="30" y="25" width="1.4" height="1.2" fill="#fff"/><rect x="30" y="28" width="1.4" height="1.2" fill="#fff"/><path d="M3 3H10L12 6V12L9 14V19L12 21V26L14 29L28 30V9H22L20 11V15L23 17V22L18 24Z" fill="url(#filmg)" stroke="#333" stroke-width="0.7"/><path d="M3 1Q13 -1 17 3L20 9L8 11Q7 5 3 4Z" fill="#2050e0" stroke="#111" stroke-width="1.2"/><path d="M8 11L20 9L22 20L12 22Z" fill="#2050e0" stroke="#111" stroke-width="1.2"/><path d="M12 22L22 20L29 27Q28 32 23 32L16 31Z" fill="#2050e0" stroke="#111" stroke-width="1.2"/></svg>
<svg style="left:1089px;top:96px" width="33" height="33"><rect x="0" y="0" width="3" height="32" fill="#111"/><rect x="0.8" y="2" width="1.4" height="1.2" fill="#fff"/><rect x="0.8" y="5" width="1.4" height="1.2" fill="#fff"/><rect x="0.8" y="8" width="1.4" height="1.2" fill="#fff"/><rect x="0.8" y="11" width="1.4" height="1.2" fill="#fff"/><rect x="0.8" y="14" width="1.4" height="1.2" fill="#fff"/><rect x="0.8" y="17" width="1.4" height="1.2" fill="#fff"/><rect x="0.8" y="20" width="1.4" height="1.2" fill="#fff"/><rect x="0.8" y="23" width="1.4" height="1.2" fill="#fff"/><rect x="0.8" y="26" width="1.4" height="1.2" fill="#fff"/><rect x="0.8" y="29" width="1.4" height="1.2" fill="#fff"/><rect x="29.2" y="8" width="3" height="24" fill="#111"/><rect x="30" y="10" width="1.4" height="1.2" fill="#fff"/><rect x="30" y="13" width="1.4" height="1.2" fill="#fff"/><rect x="30" y="16" width="1.4" height="1.2" fill="#fff"/><rect x="30" y="19" width="1.4" height="1.2" fill="#fff"/><rect x="30" y="22" width="1.4" height="1.2" fill="#fff"/><rect x="30" y="25" width="1.4" height="1.2" fill="#fff"/><rect x="30" y="28" width="1.4" height="1.2" fill="#fff"/><path d="M3 3H10L12 6V12L9 14V19L12 21V26L14 29L28 30V9H22L20 11V15L23 17V22L18 24Z" fill="url(#filmg)" stroke="#333" stroke-width="0.7"/><path d="M3 1Q13 -1 17 3L20 9L8 11Q7 5 3 4Z" fill="#f0f020" stroke="#111" stroke-width="1.2"/><path d="M8 11L20 9L22 20L12 22Z" fill="#f0f020" stroke="#111" stroke-width="1.2"/><path d="M12 22L22 20L29 27Q28 32 23 32L16 31Z" fill="#f0f020" stroke="#111" stroke-width="1.2"/></svg>
<svg style="left:1128px;top:96px" width="33" height="33"><rect x="0" y="0" width="3" height="32" fill="#111"/><rect x="0.8" y="2" width="1.4" height="1.2" fill="#fff"/><rect x="0.8" y="5" width="1.4" height="1.2" fill="#fff"/><rect x="0.8" y="8" width="1.4" height="1.2" fill="#fff"/><rect x="0.8" y="11" width="1.4" height="1.2" fill="#fff"/><rect x="0.8" y="14" width="1.4" height="1.2" fill="#fff"/><rect x="0.8" y="17" width="1.4" height="1.2" fill="#fff"/><rect x="0.8" y="20" width="1.4" height="1.2" fill="#fff"/><rect x="0.8" y="23" width="1.4" height="1.2" fill="#fff"/><rect x="0.8" y="26" width="1.4" height="1.2" fill="#fff"/><rect x="0.8" y="29" width="1.4" height="1.2" fill="#fff"/><rect x="29.2" y="8" width="3" height="24" fill="#111"/><rect x="30" y="10" width="1.4" height="1.2" fill="#fff"/><rect x="30" y="13" width="1.4" height="1.2" fill="#fff"/><rect x="30" y="16" width="1.4" height="1.2" fill="#fff"/><rect x="30" y="19" width="1.4" height="1.2" fill="#fff"/><rect x="30" y="22" width="1.4" height="1.2" fill="#fff"/><rect x="30" y="25" width="1.4" height="1.2" fill="#fff"/><rect x="30" y="28" width="1.4" height="1.2" fill="#fff"/><path d="M3 3H10L12 6V12L9 14V19L12 21V26L14 29L28 30V9H22L20 11V15L23 17V22L18 24Z" fill="url(#filmg)" stroke="#333" stroke-width="0.7"/><path d="M3 1Q13 -1 17 3L20 9L8 11Q7 5 3 4Z" fill="#30e0f0" stroke="#111" stroke-width="1.2"/><path d="M8 11L20 9L22 20L12 22Z" fill="#30e0f0" stroke="#111" stroke-width="1.2"/><path d="M12 22L22 20L29 27Q28 32 23 32L16 31Z" fill="#30e0f0" stroke="#111" stroke-width="1.2"/></svg>
<svg style="left:1167px;top:96px" width="33" height="33"><rect x="0" y="0" width="3" height="32" fill="#111"/><rect x="0.8" y="2" width="1.4" height="1.2" fill="#fff"/><rect x="0.8" y="5" width="1.4" height="1.2" fill="#fff"/><rect x="0.8" y="8" width="1.4" height="1.2" fill="#fff"/><rect x="0.8" y="11" width="1.4" height="1.2" fill="#fff"/><rect x="0.8" y="14" width="1.4" height="1.2" fill="#fff"/><rect x="0.8" y="17" width="1.4" height="1.2" fill="#fff"/><rect x="0.8" y="20" width="1.4" height="1.2" fill="#fff"/><rect x="0.8" y="23" width="1.4" height="1.2" fill="#fff"/><rect x="0.8" y="26" width="1.4" height="1.2" fill="#fff"/><rect x="0.8" y="29" width="1.4" height="1.2" fill="#fff"/><rect x="29.2" y="8" width="3" height="24" fill="#111"/><rect x="30" y="10" width="1.4" height="1.2" fill="#fff"/><rect x="30" y="13" width="1.4" height="1.2" fill="#fff"/><rect x="30" y="16" width="1.4" height="1.2" fill="#fff"/><rect x="30" y="19" width="1.4" height="1.2" fill="#fff"/><rect x="30" y="22" width="1.4" height="1.2" fill="#fff"/><rect x="30" y="25" width="1.4" height="1.2" fill="#fff"/><rect x="30" y="28" width="1.4" height="1.2" fill="#fff"/><path d="M3 3H10L12 6V12L9 14V19L12 21V26L14 29L28 30V9H22L20 11V15L23 17V22L18 24Z" fill="url(#filmg)" stroke="#333" stroke-width="0.7"/><path d="M3 1Q13 -1 17 3L20 9L8 11Q7 5 3 4Z" fill="#b020d0" stroke="#111" stroke-width="1.2"/><path d="M8 11L20 9L22 20L12 22Z" fill="#b020d0" stroke="#111" stroke-width="1.2"/><path d="M12 22L22 20L29 27Q28 32 23 32L16 31Z" fill="#b020d0" stroke="#111" stroke-width="1.2"/></svg>
<svg style="left:1206px;top:96px" width="33" height="33"><rect x="0" y="0" width="3" height="32" fill="#111"/><rect x="0.8" y="2" width="1.4" height="1.2" fill="#fff"/><rect x="0.8" y="5" width="1.4" height="1.2" fill="#fff"/><rect x="0.8" y="8" width="1.4" height="1.2" fill="#fff"/><rect x="0.8" y="11" width="1.4" height="1.2" fill="#fff"/><rect x="0.8" y="14" width="1.4" height="1.2" fill="#fff"/><rect x="0.8" y="17" width="1.4" height="1.2" fill="#fff"/><rect x="0.8" y="20" width="1.4" height="1.2" fill="#fff"/><rect x="0.8" y="23" width="1.4" height="1.2" fill="#fff"/><rect x="0.8" y="26" width="1.4" height="1.2" fill="#fff"/><rect x="0.8" y="29" width="1.4" height="1.2" fill="#fff"/><rect x="29.2" y="8" width="3" height="24" fill="#111"/><rect x="30" y="10" width="1.4" height="1.2" fill="#fff"/><rect x="30" y="13" width="1.4" height="1.2" fill="#fff"/><rect x="30" y="16" width="1.4" height="1.2" fill="#fff"/><rect x="30" y="19" width="1.4" height="1.2" fill="#fff"/><rect x="30" y="22" width="1.4" height="1.2" fill="#fff"/><rect x="30" y="25" width="1.4" height="1.2" fill="#fff"/><rect x="30" y="28" width="1.4" height="1.2" fill="#fff"/><path d="M3 3H10L12 6V12L9 14V19L12 21V26L14 29L28 30V9H22L20 11V15L23 17V22L18 24Z" fill="url(#filmg)" stroke="#333" stroke-width="0.7"/><path d="M3 1Q13 -1 17 3L20 9L8 11Q7 5 3 4Z" fill="#e01010" stroke="#111" stroke-width="1.2"/><path d="M8 11L20 9L22 20L12 22Z" fill="#10c030" stroke="#111" stroke-width="1.2"/><path d="M12 22L22 20L29 27Q28 32 23 32L16 31Z" fill="#3090f0" stroke="#111" stroke-width="1.2"/></svg>
<div style="left:0px;top:132px;width:1920px;height:1px;background:#8c93a0"></div>
<div style="left:0px;top:133px;width:1920px;height:1px;background:#a0a0a0"></div>
<div style="left:0px;top:134px;width:1920px;height:3px;background:#6e6e6e"></div>
<div style="left:0px;top:137px;width:1920px;height:883px;background:#ebebeb"></div>
<div style="left:0px;top:137px;width:1px;height:883px;background:#a0a0a0"></div>
<div style="left:1px;top:137px;width:1px;height:883px;background:#6e6e6e"></div>
<div style="left:2px;top:137px;width:3px;height:883px;background:#fff"></div>
<div style="left:1897px;top:137px;width:23px;height:883px;background:#f0f0f0"></div>
<div style="left:1897px;top:137px;width:1px;height:883px;background:#fff"></div>
<div style="left:1898px;top:137px;width:3px;height:883px;background:#6e6e6e"></div>
<div style="left:1918px;top:137px;width:2px;height:883px;background:#fff"></div>
<div style="left:1903px;top:152px;width:14px;height:826px;background:#cdcdcd"></div>
<svg style="left:1904px;top:140px" width="10" height="8"><path d="M1 6L5 2L9 6" fill="none" stroke="#606060" stroke-width="1.5"/></svg>
<svg style="left:1904px;top:1010px" width="10" height="8"><path d="M1 2L5 6L9 2" fill="none" stroke="#606060" stroke-width="1.5"/></svg>
<div style="left:2px;top:137px;width:1895px;height:3px;background:#fff"></div>
<div style="left:5px;top:140px;width:1300px;height:57px;background:#6e6e6e;border-radius:5px 5px 0 0"></div>
<div style="left:1302px;top:143px;width:1px;height:53px;background:#9a9a9a"></div>
<div style="left:6px;top:141px;width:1297px;height:54px;background:#e8e8e8"></div>
<div style="left:6px;top:141px;width:1297px;height:17px;background:linear-gradient(#e8eef8,#e1e8f2);border-radius:4px 4px 0 0"></div>
<div style="left:6px;top:158px;width:1297px;height:1px;background:#8c8c8c"></div>
<div class="t" style="left:12px;top:144px;font-weight:bold;font-size:12px;color:#3c3c3c;letter-spacing:0.75px">View</div>
<div style="left:6px;top:159px;width:1298px;height:1px;background:#fff"></div>
<div style="left:7px;top:163px;width:199px;height:22px;background:#fff;border-top:2px solid #6e6e6e;border-left:2px solid #6e6e6e;border-right:1px solid #e0e0e0;border-bottom:1px solid #e0e0e0"></div>
<div class="t" style="left:11px;top:168px;font-size:13.7px">Color Checker</div>
<div style="left:188px;top:166px;width:16px;height:17px;background:#ececec;border:1px solid #fff;border-right-color:#888;border-bottom-color:#888"></div>
<svg style="left:192px;top:172px" width="9" height="5"><path d="M0 0h8L4 4z" fill="#000"/></svg>
<div style="left:215px;top:160px;width:1057px;height:28px;background:#f0f0f0;border-left:1px solid #c8c8c8;border-top:1px solid #c8c8c8"></div>
<div class="t" style="left:217px;top:163px;font-size:16px;font-weight:bold;letter-spacing:0.03px">Color Space: HDTV Rec709 , White Point: D65, EOTF:&nbsp; SDR, Power law (black compensation) w/gamma = 2.40, # of measures: 0 [20:23:10]</div>
<div style="left:1278px;top:163px;width:16px;height:12px;background:#f0f0f0;border:1px solid #fff;border-right-color:#777;border-bottom-color:#777"></div>
<div style="left:1278px;top:176px;width:16px;height:12px;background:#f0f0f0;border:1px solid #fff;border-right-color:#777;border-bottom-color:#777"></div>
<svg style="left:1282px;top:166px" width="8" height="5"><path d="M0 4h7L3.5 0z" fill="#000"/></svg>
<svg style="left:1282px;top:180px" width="8" height="5"><path d="M0 0h7L3.5 4z" fill="#000"/></svg>
<div style="left:1305px;top:137px;width:5px;height:66px;background:#fff"></div>
<div style="left:1306px;top:140px;width:2px;height:58px;background:#8a8a8a"></div>
<div style="left:1311px;top:140px;width:305px;height:57px;background:#6e6e6e;border-radius:5px 5px 0 0"></div>
<div style="left:1613px;top:143px;width:1px;height:53px;background:#9a9a9a"></div>
<div style="left:1312px;top:141px;width:302px;height:54px;background:#e8e8e8"></div>
<div style="left:1312px;top:141px;width:302px;height:17px;background:linear-gradient(#e8eef8,#e1e8f2);border-radius:4px 4px 0 0"></div>
<div style="left:1312px;top:158px;width:302px;height:1px;background:#8c8c8c"></div>
<div class="t" style="left:1318px;top:144px;font-weight:bold;font-size:12px;color:#3c3c3c;letter-spacing:0.75px">Sensor</div>
<div class="t" style="left:1316px;top:161px;font-size:14px">Simulated sensor</div>
<div class="t" style="left:1318px;top:178px;font-size:14px">Adaptive</div>
<svg style="left:1424px;top:178px" width="12" height="12"><path d="M0.5 0.5L11 6L0.5 11.5z" fill="#7cd84a" stroke="#5ab030"/></svg>
<svg style="left:1588px;top:175px" width="18" height="18"><rect x="1" y="3" width="12" height="14" fill="#5b8fd8" stroke="#2a4f90"/><rect x="3" y="5" width="8" height="10" fill="#e8f0ff"/><path d="M8 12L16 4" stroke="#c04020" stroke-width="2"/></svg>
<div style="left:1616px;top:137px;width:4px;height:66px;background:#fff"></div>
<div style="left:1620px;top:140px;width:120px;height:57px;background:#6e6e6e;border-radius:5px 5px 0 0"></div>
<div style="left:1737px;top:143px;width:1px;height:53px;background:#9a9a9a"></div>
<div style="left:1621px;top:141px;width:117px;height:54px;background:#e8e8e8"></div>
<div style="left:1621px;top:141px;width:117px;height:17px;background:linear-gradient(#e8eef8,#e1e8f2);border-radius:4px 4px 0 0"></div>
<div style="left:1621px;top:158px;width:117px;height:1px;background:#8c8c8c"></div>
<div class="t" style="left:1627px;top:144px;font-weight:bold;font-size:12px;color:#3c3c3c;letter-spacing:0.75px">Generator</div>
<div class="t" style="left:1624px;top:162px;font-size:13px">GDI</div>
<svg style="left:1717px;top:177px" width="18" height="18"><rect x="1" y="3" width="12" height="14" fill="#5b8fd8" stroke="#2a4f90"/><rect x="3" y="5" width="8" height="10" fill="#e8f0ff"/><path d="M8 12L16 4" stroke="#c04020" stroke-width="2"/></svg>
<div style="left:1740px;top:137px;width:4px;height:66px;background:#fff"></div>
<div style="left:1744px;top:140px;width:152px;height:57px;background:#6e6e6e;border-radius:5px 5px 0 0"></div>
<div style="left:1893px;top:143px;width:1px;height:53px;background:#9a9a9a"></div>
<div style="left:1745px;top:141px;width:149px;height:54px;background:#e8e8e8"></div>
<div style="left:1745px;top:141px;width:149px;height:17px;background:linear-gradient(#e8eef8,#e1e8f2);border-radius:4px 4px 0 0"></div>
<div style="left:1745px;top:158px;width:149px;height:1px;background:#8c8c8c"></div>
<div class="t" style="left:1751px;top:144px;font-weight:bold;font-size:12px;color:#3c3c3c;letter-spacing:0.75px">Parameters</div>
<div style="left:1754px;top:162px;width:13px;height:13px;background:#fff;border:1px solid #333"></div>
<div class="t" style="left:1773px;top:162px;font-size:13.7px">Reference</div>
<div style="left:1754px;top:179px;width:13px;height:13px;background:#fff;border:1px solid #c0c0c0"></div>
<div class="t" style="left:1773px;top:179px;font-size:13.7px;color:#a8a8a8">XYZ Adjustment</div>
<div style="left:2px;top:197px;width:1895px;height:8px;background:#fff"></div>
<div style="left:2px;top:198px;width:1895px;height:4px;background:#6e6e6e"></div>
<div style="left:2px;top:199px;width:1895px;height:2px;background:#8c8c8c"></div>
<div style="left:5px;top:205px;width:1804px;height:214px;background:#6e6e6e;border-radius:5px 5px 0 0"></div>
<div style="left:6px;top:206px;width:1802px;height:212px;background:#e8e8e8;border:1px solid #e8e800;border-top:none;border-right-color:#e8e800"></div>
<div style="left:6px;top:206px;width:1802px;height:14px;background:linear-gradient(#e8eef8,#e1e8f2);border-radius:4px 4px 0 0"></div>
<div style="left:6px;top:206px;width:1px;height:212px;background:#e8e800"></div>
<div style="left:1807px;top:206px;width:1px;height:213px;background:#e8e800"></div>
<div style="left:6px;top:414px;width:1802px;height:5px;background:#fff"></div>
<div style="left:6px;top:419px;width:1802px;height:1px;background:#e8e800"></div>
<div class="t" style="left:11px;top:209px;font-weight:bold;font-size:10.6px;color:#303030">Classic GCD (&nbsp; Average dE: 2.12 [0.74,1.41,1.06] max: 4.93 [CIE2000] )</div>
<div style="left:8px;top:219px;width:1781px;height:197px;background:#6e6e6e"></div>
<div style="left:9px;top:220px;width:1779px;height:195px;background:#fff"></div>
<div style="left:1789px;top:219px;width:17px;height:2px;background:#e8e800"></div>
<div style="left:9px;top:220px;width:1762px;height:178px;overflow:hidden">
<div style="left:0px;top:0px;width:87px;height:24px;background:#f0f0f0;border-right:1px solid #a0a0a0;border-bottom:1px solid #a0a0a0"></div>
<div class="t" style="left:0px;top:7px;font-weight:bold;font-size:12px;width:87px;text-align:center;letter-spacing:-0.35px">Color Checker</div>
<div style="left:87px;top:1px;width:79px;height:22px;background:#000000;border-left:1px solid rgba(255,255,255,0.35);border-top:1px solid rgba(255,255,255,0.35)"></div>
<div style="left:166px;top:0px;width:1px;height:24px;background:#a0a0a0"></div>
<div class="t" style="left:87px;top:7px;font-weight:bold;font-size:12px;color:#fff;width:79px;text-align:center;letter-spacing:-0.35px">Black</div>
<div style="left:167px;top:1px;width:79px;height:22px;background:#959595;border-left:1px solid rgba(255,255,255,0.35);border-top:1px solid rgba(255,255,255,0.35)"></div>
<div style="left:246px;top:0px;width:1px;height:24px;background:#a0a0a0"></div>
<div class="t" style="left:167px;top:7px;font-weight:bold;font-size:12px;color:#ececec;width:79px;text-align:center;letter-spacing:-0.35px">Gray 35</div>
<div style="left:247px;top:1px;width:79px;height:22px;background:#b4b4b4;border-left:1px solid rgba(255,255,255,0.35);border-top:1px solid rgba(255,255,255,0.35)"></div>
<div style="left:326px;top:0px;width:1px;height:24px;background:#a0a0a0"></div>
<div class="t" style="left:247px;top:7px;font-weight:bold;font-size:12px;color:#000;width:79px;text-align:center;letter-spacing:-0.35px">Gray 50</div>
<div style="left:327px;top:1px;width:79px;height:22px;background:#cdcdcd;border-left:1px solid rgba(255,255,255,0.35);border-top:1px solid rgba(255,255,255,0.35)"></div>
<div style="left:406px;top:0px;width:1px;height:24px;background:#a0a0a0"></div>
<div class="t" style="left:327px;top:7px;font-weight:bold;font-size:12px;color:#000;width:79px;text-align:center;letter-spacing:-0.35px">Gray 65</div>
<div style="left:407px;top:1px;width:79px;height:22px;background:#e3e3e3;border-left:1px solid rgba(255,255,255,0.35);border-top:1px solid rgba(255,255,255,0.35)"></div>
<div style="left:486px;top:0px;width:1px;height:24px;background:#a0a0a0"></div>
<div class="t" style="left:407px;top:7px;font-weight:bold;font-size:12px;color:#000;width:79px;text-align:center;letter-spacing:-0.35px">Gray 80</div>
<div style="left:487px;top:1px;width:79px;height:22px;background:#ffffff;border-left:1px solid rgba(255,255,255,0.35);border-top:1px solid rgba(255,255,255,0.35)"></div>
<div style="left:566px;top:0px;width:1px;height:24px;background:#a0a0a0"></div>
<div class="t" style="left:487px;top:7px;font-weight:bold;font-size:12px;color:#000;width:79px;text-align:center;letter-spacing:-0.35px">White</div>
<div style="left:567px;top:1px;width:79px;height:22px;background:#735244;border-left:1px solid rgba(255,255,255,0.35);border-top:1px solid rgba(255,255,255,0.35)"></div>
<div style="left:646px;top:0px;width:1px;height:24px;background:#a0a0a0"></div>
<div class="t" style="left:567px;top:7px;font-weight:bold;font-size:12px;color:#fff;width:79px;text-align:center;letter-spacing:-0.35px">Dark skin</div>
<div style="left:647px;top:1px;width:79px;height:22px;background:#c29682;border-left:1px solid rgba(255,255,255,0.35);border-top:1px solid rgba(255,255,255,0.35)"></div>
<div style="left:726px;top:0px;width:1px;height:24px;background:#a0a0a0"></div>
<div class="t" style="left:647px;top:7px;font-weight:bold;font-size:12px;color:#fff;width:79px;text-align:center;letter-spacing:-0.35px">Light skin</div>
<div style="left:727px;top:1px;width:79px;height:22px;background:#627a9d;border-left:1px solid rgba(255,255,255,0.35);border-top:1px solid rgba(255,255,255,0.35)"></div>
<div style="left:806px;top:0px;width:1px;height:24px;background:#a0a0a0"></div>
<div class="t" style="left:727px;top:7px;font-weight:bold;font-size:12px;color:#fff;width:79px;text-align:center;letter-spacing:-0.35px">Blue sky</div>
<div style="left:807px;top:1px;width:79px;height:22px;background:#576c43;border-left:1px solid rgba(255,255,255,0.35);border-top:1px solid rgba(255,255,255,0.35)"></div>
<div style="left:886px;top:0px;width:1px;height:24px;background:#a0a0a0"></div>
<div class="t" style="left:807px;top:7px;font-weight:bold;font-size:12px;color:#fff;width:79px;text-align:center;letter-spacing:-0.35px">Foliage</div>
<div style="left:887px;top:1px;width:79px;height:22px;background:#8580b1;border-left:1px solid rgba(255,255,255,0.35);border-top:1px solid rgba(255,255,255,0.35)"></div>
<div style="left:966px;top:0px;width:1px;height:24px;background:#a0a0a0"></div>
<div class="t" style="left:887px;top:7px;font-weight:bold;font-size:12px;color:#fff;width:79px;text-align:center;letter-spacing:-0.35px">Blue flower</div>
<div style="left:967px;top:1px;width:79px;height:22px;background:#67bdaa;border-left:1px solid rgba(255,255,255,0.35);border-top:1px solid rgba(255,255,255,0.35)"></div>
<div style="left:1046px;top:0px;width:1px;height:24px;background:#a0a0a0"></div>
<div class="t" style="left:967px;top:7px;font-weight:bold;font-size:12px;color:#fff;width:79px;text-align:center;letter-spacing:-0.35px">Bluish green</div>
<div style="left:1047px;top:1px;width:79px;height:22px;background:#d67e2c;border-left:1px solid rgba(255,255,255,0.35);border-top:1px solid rgba(255,255,255,0.35)"></div>
<div style="left:1126px;top:0px;width:1px;height:24px;background:#a0a0a0"></div>
<div class="t" style="left:1047px;top:7px;font-weight:bold;font-size:12px;color:#fff;width:79px;text-align:center;letter-spacing:-0.35px">Orange</div>
<div style="left:1127px;top:1px;width:79px;height:22px;background:#505ba6;border-left:1px solid rgba(255,255,255,0.35);border-top:1px solid rgba(255,255,255,0.35)"></div>
<div style="left:1206px;top:0px;width:1px;height:24px;background:#a0a0a0"></div>
<div class="t" style="left:1127px;top:7px;font-weight:bold;font-size:12px;color:#fff;width:79px;text-align:center;letter-spacing:-0.35px">Purplish blue</div>
<div style="left:1207px;top:1px;width:79px;height:22px;background:#c15a63;border-left:1px solid rgba(255,255,255,0.35);border-top:1px solid rgba(255,255,255,0.35)"></div>
<div style="left:1286px;top:0px;width:1px;height:24px;background:#a0a0a0"></div>
<div class="t" style="left:1207px;top:7px;font-weight:bold;font-size:12px;color:#fff;width:79px;text-align:center;letter-spacing:-0.35px">Moderate</div>
<div style="left:1287px;top:1px;width:79px;height:22px;background:#5e3c6c;border-left:1px solid rgba(255,255,255,0.35);border-top:1px solid rgba(255,255,255,0.35)"></div>
<div style="left:1366px;top:0px;width:1px;height:24px;background:#a0a0a0"></div>
<div class="t" style="left:1287px;top:7px;font-weight:bold;font-size:12px;color:#fff;width:79px;text-align:center;letter-spacing:-0.35px">Purple</div>
<div style="left:1367px;top:1px;width:79px;height:22px;background:#9dbc40;border-left:1px solid rgba(255,255,255,0.35);border-top:1px solid rgba(255,255,255,0.35)"></div>
<div style="left:1446px;top:0px;width:1px;height:24px;background:#a0a0a0"></div>
<div class="t" style="left:1367px;top:7px;font-weight:bold;font-size:12px;color:#000;width:79px;text-align:center;letter-spacing:-0.35px">Yellow green</div>
<div style="left:1447px;top:1px;width:79px;height:22px;background:#e0a32e;border-left:1px solid rgba(255,255,255,0.35);border-top:1px solid rgba(255,255,255,0.35)"></div>
<div style="left:1526px;top:0px;width:1px;height:24px;background:#a0a0a0"></div>
<div class="t" style="left:1447px;top:7px;font-weight:bold;font-size:12px;color:#000;width:79px;text-align:center;letter-spacing:-0.35px">Orange</div>
<div style="left:1527px;top:1px;width:79px;height:22px;background:#383d96;border-left:1px solid rgba(255,255,255,0.35);border-top:1px solid rgba(255,255,255,0.35)"></div>
<div style="left:1606px;top:0px;width:1px;height:24px;background:#a0a0a0"></div>
<div class="t" style="left:1527px;top:7px;font-weight:bold;font-size:12px;color:#fff;width:79px;text-align:center;letter-spacing:-0.35px">Blue</div>
<div style="left:1607px;top:1px;width:79px;height:22px;background:#469449;border-left:1px solid rgba(255,255,255,0.35);border-top:1px solid rgba(255,255,255,0.35)"></div>
<div style="left:1686px;top:0px;width:1px;height:24px;background:#a0a0a0"></div>
<div class="t" style="left:1607px;top:7px;font-weight:bold;font-size:12px;color:#fff;width:79px;text-align:center;letter-spacing:-0.35px">Green</div>
<div style="left:1687px;top:1px;width:79px;height:22px;background:#af363c;border-left:1px solid rgba(255,255,255,0.35);border-top:1px solid rgba(255,255,255,0.35)"></div>
<div style="left:1766px;top:0px;width:1px;height:24px;background:#a0a0a0"></div>
<div class="t" style="left:1687px;top:7px;font-weight:bold;font-size:12px;color:#fff;width:79px;text-align:center;letter-spacing:-0.35px">Red</div>
<div style="left:0px;top:23px;width:1762px;height:1px;background:#a0a0a0"></div>
<div style="left:0px;top:24px;width:87px;height:25px;background:#f0f0f0;border-right:1px solid #a0a0a0;border-bottom:1px solid #a0a0a0"></div>
<div class="t" style="left:0px;top:31px;font-weight:bold;font-size:12px;width:86px;text-align:center;letter-spacing:-0.25px">x</div>
<div style="left:87px;top:24px;width:80px;height:25px;background:#fff;border-right:1px solid #c8c8c8;border-bottom:1px solid #c8c8c8"></div>
<div class="t" style="left:87px;top:31px;font-size:12px;font-weight:normal;width:78px;text-align:right;letter-spacing:-0.75px;word-spacing:2px">0.2324</div>
<div style="left:167px;top:24px;width:80px;height:25px;background:#fff;border-right:1px solid #c8c8c8;border-bottom:1px solid #c8c8c8"></div>
<div class="t" style="left:167px;top:31px;font-size:12px;font-weight:normal;width:78px;text-align:right;letter-spacing:-0.75px;word-spacing:2px">0.3122</div>
<div style="left:247px;top:24px;width:80px;height:25px;background:#fff;border-right:1px solid #c8c8c8;border-bottom:1px solid #c8c8c8"></div>
<div class="t" style="left:247px;top:31px;font-size:12px;font-weight:normal;width:78px;text-align:right;letter-spacing:-0.75px;word-spacing:2px">0.3134</div>
<div style="left:327px;top:24px;width:80px;height:25px;background:#fff;border-right:1px solid #c8c8c8;border-bottom:1px solid #c8c8c8"></div>
<div class="t" style="left:327px;top:31px;font-size:12px;font-weight:normal;width:78px;text-align:right;letter-spacing:-0.75px;word-spacing:2px">0.3142</div>
<div style="left:407px;top:24px;width:80px;height:25px;background:#fff;border-right:1px solid #c8c8c8;border-bottom:1px solid #c8c8c8"></div>
<div class="t" style="left:407px;top:31px;font-size:12px;font-weight:normal;width:78px;text-align:right;letter-spacing:-0.75px;word-spacing:2px">0.3149</div>
<div style="left:487px;top:24px;width:80px;height:25px;background:#fff;border-right:1px solid #c8c8c8;border-bottom:1px solid #c8c8c8"></div>
<div class="t" style="left:487px;top:31px;font-size:12px;font-weight:normal;width:78px;text-align:right;letter-spacing:-0.75px;word-spacing:2px">0.3150</div>
<div style="left:567px;top:24px;width:80px;height:25px;background:#fff;border-right:1px solid #c8c8c8;border-bottom:1px solid #c8c8c8"></div>
<div class="t" style="left:567px;top:31px;font-size:12px;font-weight:normal;width:78px;text-align:right;letter-spacing:-0.75px;word-spacing:2px">0.3851</div>
<div style="left:647px;top:24px;width:80px;height:25px;background:#fff;border-right:1px solid #c8c8c8;border-bottom:1px solid #c8c8c8"></div>
<div class="t" style="left:647px;top:31px;font-size:12px;font-weight:normal;width:78px;text-align:right;letter-spacing:-0.75px;word-spacing:2px">0.3704</div>
<div style="left:727px;top:24px;width:80px;height:25px;background:#fff;border-right:1px solid #c8c8c8;border-bottom:1px solid #c8c8c8"></div>
<div class="t" style="left:727px;top:31px;font-size:12px;font-weight:normal;width:78px;text-align:right;letter-spacing:-0.75px;word-spacing:2px">0.2531</div>
<div style="left:807px;top:24px;width:80px;height:25px;background:#fff;border-right:1px solid #c8c8c8;border-bottom:1px solid #c8c8c8"></div>
<div class="t" style="left:807px;top:31px;font-size:12px;font-weight:normal;width:78px;text-align:right;letter-spacing:-0.75px;word-spacing:2px">0.3300</div>
<div style="left:887px;top:24px;width:80px;height:25px;background:#fff;border-right:1px solid #c8c8c8;border-bottom:1px solid #c8c8c8"></div>
<div class="t" style="left:887px;top:31px;font-size:12px;font-weight:normal;width:78px;text-align:right;letter-spacing:-0.75px;word-spacing:2px">0.2717</div>
<div style="left:967px;top:24px;width:80px;height:25px;background:#fff;border-right:1px solid #c8c8c8;border-bottom:1px solid #c8c8c8"></div>
<div class="t" style="left:967px;top:31px;font-size:12px;font-weight:normal;width:78px;text-align:right;letter-spacing:-0.75px;word-spacing:2px">0.2646</div>
<div style="left:1047px;top:24px;width:80px;height:25px;background:#fff;border-right:1px solid #c8c8c8;border-bottom:1px solid #c8c8c8"></div>
<div class="t" style="left:1047px;top:31px;font-size:12px;font-weight:normal;width:78px;text-align:right;letter-spacing:-0.75px;word-spacing:2px">0.4951</div>
<div style="left:1127px;top:24px;width:80px;height:25px;background:#fff;border-right:1px solid #c8c8c8;border-bottom:1px solid #c8c8c8"></div>
<div class="t" style="left:1127px;top:31px;font-size:12px;font-weight:normal;width:78px;text-align:right;letter-spacing:-0.75px;word-spacing:2px">0.2220</div>
<div style="left:1207px;top:24px;width:80px;height:25px;background:#fff;border-right:1px solid #c8c8c8;border-bottom:1px solid #c8c8c8"></div>
<div class="t" style="left:1207px;top:31px;font-size:12px;font-weight:normal;width:78px;text-align:right;letter-spacing:-0.75px;word-spacing:2px">0.4440</div>
<div style="left:1287px;top:24px;width:80px;height:25px;background:#fff;border-right:1px solid #c8c8c8;border-bottom:1px solid #c8c8c8"></div>
<div class="t" style="left:1287px;top:31px;font-size:12px;font-weight:normal;width:78px;text-align:right;letter-spacing:-0.75px;word-spacing:2px">0.2867</div>
<div style="left:1367px;top:24px;width:80px;height:25px;background:#fff;border-right:1px solid #c8c8c8;border-bottom:1px solid #c8c8c8"></div>
<div class="t" style="left:1367px;top:31px;font-size:12px;font-weight:normal;width:78px;text-align:right;letter-spacing:-0.75px;word-spacing:2px">0.3685</div>
<div style="left:1447px;top:24px;width:80px;height:25px;background:#fff;border-right:1px solid #c8c8c8;border-bottom:1px solid #c8c8c8"></div>
<div class="t" style="left:1447px;top:31px;font-size:12px;font-weight:normal;width:78px;text-align:right;letter-spacing:-0.75px;word-spacing:2px">0.4607</div>
<div style="left:1527px;top:24px;width:80px;height:25px;background:#fff;border-right:1px solid #c8c8c8;border-bottom:1px solid #c8c8c8"></div>
<div class="t" style="left:1527px;top:31px;font-size:12px;font-weight:normal;width:78px;text-align:right;letter-spacing:-0.75px;word-spacing:2px">0.1966</div>
<div style="left:1607px;top:24px;width:80px;height:25px;background:#fff;border-right:1px solid #c8c8c8;border-bottom:1px solid #c8c8c8"></div>
<div class="t" style="left:1607px;top:31px;font-size:12px;font-weight:normal;width:78px;text-align:right;letter-spacing:-0.75px;word-spacing:2px">0.3008</div>
<div style="left:1687px;top:24px;width:80px;height:25px;background:#fff;border-right:1px solid #c8c8c8;border-bottom:1px solid #c8c8c8"></div>
<div class="t" style="left:1687px;top:31px;font-size:12px;font-weight:normal;width:78px;text-align:right;letter-spacing:-0.75px;word-spacing:2px">0.5138</div>
<div style="left:0px;top:49px;width:87px;height:25px;background:#f0f0f0;border-right:1px solid #a0a0a0;border-bottom:1px solid #a0a0a0"></div>
<div class="t" style="left:0px;top:56px;font-weight:bold;font-size:12px;width:86px;text-align:center;letter-spacing:-0.25px">y</div>
<div style="left:87px;top:49px;width:80px;height:25px;background:#fff;border-right:1px solid #c8c8c8;border-bottom:1px solid #c8c8c8"></div>
<div class="t" style="left:87px;top:56px;font-size:12px;font-weight:normal;width:78px;text-align:right;letter-spacing:-0.75px;word-spacing:2px">0.1921</div>
<div style="left:167px;top:49px;width:80px;height:25px;background:#fff;border-right:1px solid #c8c8c8;border-bottom:1px solid #c8c8c8"></div>
<div class="t" style="left:167px;top:56px;font-size:12px;font-weight:normal;width:78px;text-align:right;letter-spacing:-0.75px;word-spacing:2px">0.3275</div>
<div style="left:247px;top:49px;width:80px;height:25px;background:#fff;border-right:1px solid #c8c8c8;border-bottom:1px solid #c8c8c8"></div>
<div class="t" style="left:247px;top:56px;font-size:12px;font-weight:normal;width:78px;text-align:right;letter-spacing:-0.75px;word-spacing:2px">0.3289</div>
<div style="left:327px;top:49px;width:80px;height:25px;background:#fff;border-right:1px solid #c8c8c8;border-bottom:1px solid #c8c8c8"></div>
<div class="t" style="left:327px;top:56px;font-size:12px;font-weight:normal;width:78px;text-align:right;letter-spacing:-0.75px;word-spacing:2px">0.3302</div>
<div style="left:407px;top:49px;width:80px;height:25px;background:#fff;border-right:1px solid #c8c8c8;border-bottom:1px solid #c8c8c8"></div>
<div class="t" style="left:407px;top:56px;font-size:12px;font-weight:normal;width:78px;text-align:right;letter-spacing:-0.75px;word-spacing:2px">0.3307</div>
<div style="left:487px;top:49px;width:80px;height:25px;background:#fff;border-right:1px solid #c8c8c8;border-bottom:1px solid #c8c8c8"></div>
<div class="t" style="left:487px;top:56px;font-size:12px;font-weight:normal;width:78px;text-align:right;letter-spacing:-0.75px;word-spacing:2px">0.3312</div>
<div style="left:567px;top:49px;width:80px;height:25px;background:#fff;border-right:1px solid #c8c8c8;border-bottom:1px solid #c8c8c8"></div>
<div class="t" style="left:567px;top:56px;font-size:12px;font-weight:normal;width:78px;text-align:right;letter-spacing:-0.75px;word-spacing:2px">0.3519</div>
<div style="left:647px;top:49px;width:80px;height:25px;background:#fff;border-right:1px solid #c8c8c8;border-bottom:1px solid #c8c8c8"></div>
<div class="t" style="left:647px;top:56px;font-size:12px;font-weight:normal;width:78px;text-align:right;letter-spacing:-0.75px;word-spacing:2px">0.3507</div>
<div style="left:727px;top:49px;width:80px;height:25px;background:#fff;border-right:1px solid #c8c8c8;border-bottom:1px solid #c8c8c8"></div>
<div class="t" style="left:727px;top:56px;font-size:12px;font-weight:normal;width:78px;text-align:right;letter-spacing:-0.75px;word-spacing:2px">0.2660</div>
<div style="left:807px;top:49px;width:80px;height:25px;background:#fff;border-right:1px solid #c8c8c8;border-bottom:1px solid #c8c8c8"></div>
<div class="t" style="left:807px;top:56px;font-size:12px;font-weight:normal;width:78px;text-align:right;letter-spacing:-0.75px;word-spacing:2px">0.4147</div>
<div style="left:887px;top:49px;width:80px;height:25px;background:#fff;border-right:1px solid #c8c8c8;border-bottom:1px solid #c8c8c8"></div>
<div class="t" style="left:887px;top:56px;font-size:12px;font-weight:normal;width:78px;text-align:right;letter-spacing:-0.75px;word-spacing:2px">0.2530</div>
<div style="left:967px;top:49px;width:80px;height:25px;background:#fff;border-right:1px solid #c8c8c8;border-bottom:1px solid #c8c8c8"></div>
<div class="t" style="left:967px;top:56px;font-size:12px;font-weight:normal;width:78px;text-align:right;letter-spacing:-0.75px;word-spacing:2px">0.3614</div>
<div style="left:1047px;top:49px;width:80px;height:25px;background:#fff;border-right:1px solid #c8c8c8;border-bottom:1px solid #c8c8c8"></div>
<div class="t" style="left:1047px;top:56px;font-size:12px;font-weight:normal;width:78px;text-align:right;letter-spacing:-0.75px;word-spacing:2px">0.4040</div>
<div style="left:1127px;top:49px;width:80px;height:25px;background:#fff;border-right:1px solid #c8c8c8;border-bottom:1px solid #c8c8c8"></div>
<div class="t" style="left:1127px;top:56px;font-size:12px;font-weight:normal;width:78px;text-align:right;letter-spacing:-0.75px;word-spacing:2px">0.1913</div>
<div style="left:1207px;top:49px;width:80px;height:25px;background:#fff;border-right:1px solid #c8c8c8;border-bottom:1px solid #c8c8c8"></div>
<div class="t" style="left:1207px;top:56px;font-size:12px;font-weight:normal;width:78px;text-align:right;letter-spacing:-0.75px;word-spacing:2px">0.3051</div>
<div style="left:1287px;top:49px;width:80px;height:25px;background:#fff;border-right:1px solid #c8c8c8;border-bottom:1px solid #c8c8c8"></div>
<div class="t" style="left:1287px;top:56px;font-size:12px;font-weight:normal;width:78px;text-align:right;letter-spacing:-0.75px;word-spacing:2px">0.2175</div>
<div style="left:1367px;top:49px;width:80px;height:25px;background:#fff;border-right:1px solid #c8c8c8;border-bottom:1px solid #c8c8c8"></div>
<div class="t" style="left:1367px;top:56px;font-size:12px;font-weight:normal;width:78px;text-align:right;letter-spacing:-0.75px;word-spacing:2px">0.4870</div>
<div style="left:1447px;top:49px;width:80px;height:25px;background:#fff;border-right:1px solid #c8c8c8;border-bottom:1px solid #c8c8c8"></div>
<div class="t" style="left:1447px;top:56px;font-size:12px;font-weight:normal;width:78px;text-align:right;letter-spacing:-0.75px;word-spacing:2px">0.4367</div>
<div style="left:1527px;top:49px;width:80px;height:25px;background:#fff;border-right:1px solid #c8c8c8;border-bottom:1px solid #c8c8c8"></div>
<div class="t" style="left:1527px;top:56px;font-size:12px;font-weight:normal;width:78px;text-align:right;letter-spacing:-0.75px;word-spacing:2px">0.1357</div>
<div style="left:1607px;top:49px;width:80px;height:25px;background:#fff;border-right:1px solid #c8c8c8;border-bottom:1px solid #c8c8c8"></div>
<div class="t" style="left:1607px;top:56px;font-size:12px;font-weight:normal;width:78px;text-align:right;letter-spacing:-0.75px;word-spacing:2px">0.4818</div>
<div style="left:1687px;top:49px;width:80px;height:25px;background:#fff;border-right:1px solid #c8c8c8;border-bottom:1px solid #c8c8c8"></div>
<div class="t" style="left:1687px;top:56px;font-size:12px;font-weight:normal;width:78px;text-align:right;letter-spacing:-0.75px;word-spacing:2px">0.3089</div>
<div style="left:0px;top:74px;width:87px;height:25px;background:#f0f0f0;border-right:1px solid #a0a0a0;border-bottom:1px solid #a0a0a0"></div>
<div class="t" style="left:0px;top:81px;font-weight:bold;font-size:12px;width:86px;text-align:center;letter-spacing:-0.25px">Y</div>
<div style="left:87px;top:74px;width:80px;height:25px;background:#fff;border-right:1px solid #c8c8c8;border-bottom:1px solid #c8c8c8"></div>
<div class="t" style="left:87px;top:81px;font-size:12px;font-weight:normal;width:78px;text-align:right;letter-spacing:-0.75px;word-spacing:2px">0.035</div>
<div style="left:167px;top:74px;width:80px;height:25px;background:#fff;border-right:1px solid #c8c8c8;border-bottom:1px solid #c8c8c8"></div>
<div class="t" style="left:167px;top:81px;font-size:12px;font-weight:normal;width:78px;text-align:right;letter-spacing:-0.75px;word-spacing:2px">43.170</div>
<div style="left:247px;top:74px;width:80px;height:25px;background:#fff;border-right:1px solid #c8c8c8;border-bottom:1px solid #c8c8c8"></div>
<div class="t" style="left:247px;top:81px;font-size:12px;font-weight:normal;width:78px;text-align:right;letter-spacing:-0.75px;word-spacing:2px">62.624</div>
<div style="left:327px;top:74px;width:80px;height:25px;background:#fff;border-right:1px solid #c8c8c8;border-bottom:1px solid #c8c8c8"></div>
<div class="t" style="left:327px;top:81px;font-size:12px;font-weight:normal;width:78px;text-align:right;letter-spacing:-0.75px;word-spacing:2px">82.106</div>
<div style="left:407px;top:74px;width:80px;height:25px;background:#fff;border-right:1px solid #c8c8c8;border-bottom:1px solid #c8c8c8"></div>
<div class="t" style="left:407px;top:81px;font-size:12px;font-weight:normal;width:78px;text-align:right;letter-spacing:-0.75px;word-spacing:2px">101.680</div>
<div style="left:487px;top:74px;width:80px;height:25px;background:#fff;border-right:1px solid #c8c8c8;border-bottom:1px solid #c8c8c8"></div>
<div class="t" style="left:487px;top:81px;font-size:12px;font-weight:normal;width:78px;text-align:right;letter-spacing:-0.75px;word-spacing:2px">130.363</div>
<div style="left:567px;top:74px;width:80px;height:25px;background:#fff;border-right:1px solid #c8c8c8;border-bottom:1px solid #c8c8c8"></div>
<div class="t" style="left:567px;top:81px;font-size:12px;font-weight:normal;width:78px;text-align:right;letter-spacing:-0.75px;word-spacing:2px">12.093</div>
<div style="left:647px;top:74px;width:80px;height:25px;background:#fff;border-right:1px solid #c8c8c8;border-bottom:1px solid #c8c8c8"></div>
<div class="t" style="left:647px;top:81px;font-size:12px;font-weight:normal;width:78px;text-align:right;letter-spacing:-0.75px;word-spacing:2px">44.069</div>
<div style="left:727px;top:74px;width:80px;height:25px;background:#fff;border-right:1px solid #c8c8c8;border-bottom:1px solid #c8c8c8"></div>
<div class="t" style="left:727px;top:81px;font-size:12px;font-weight:normal;width:78px;text-align:right;letter-spacing:-0.75px;word-spacing:2px">22.569</div>
<div style="left:807px;top:74px;width:80px;height:25px;background:#fff;border-right:1px solid #c8c8c8;border-bottom:1px solid #c8c8c8"></div>
<div class="t" style="left:807px;top:81px;font-size:12px;font-weight:normal;width:78px;text-align:right;letter-spacing:-0.75px;word-spacing:2px">15.819</div>
<div style="left:887px;top:74px;width:80px;height:25px;background:#fff;border-right:1px solid #c8c8c8;border-bottom:1px solid #c8c8c8"></div>
<div class="t" style="left:887px;top:81px;font-size:12px;font-weight:normal;width:78px;text-align:right;letter-spacing:-0.75px;word-spacing:2px">28.500</div>
<div style="left:967px;top:74px;width:80px;height:25px;background:#fff;border-right:1px solid #c8c8c8;border-bottom:1px solid #c8c8c8"></div>
<div class="t" style="left:967px;top:81px;font-size:12px;font-weight:normal;width:78px;text-align:right;letter-spacing:-0.75px;word-spacing:2px">51.855</div>
<div style="left:1047px;top:74px;width:80px;height:25px;background:#fff;border-right:1px solid #c8c8c8;border-bottom:1px solid #c8c8c8"></div>
<div class="t" style="left:1047px;top:81px;font-size:12px;font-weight:normal;width:78px;text-align:right;letter-spacing:-0.75px;word-spacing:2px">35.139</div>
<div style="left:1127px;top:74px;width:80px;height:25px;background:#fff;border-right:1px solid #c8c8c8;border-bottom:1px solid #c8c8c8"></div>
<div class="t" style="left:1127px;top:81px;font-size:12px;font-weight:normal;width:78px;text-align:right;letter-spacing:-0.75px;word-spacing:2px">13.518</div>
<div style="left:1207px;top:74px;width:80px;height:25px;background:#fff;border-right:1px solid #c8c8c8;border-bottom:1px solid #c8c8c8"></div>
<div class="t" style="left:1207px;top:81px;font-size:12px;font-weight:normal;width:78px;text-align:right;letter-spacing:-0.75px;word-spacing:2px">22.728</div>
<div style="left:1287px;top:74px;width:80px;height:25px;background:#fff;border-right:1px solid #c8c8c8;border-bottom:1px solid #c8c8c8"></div>
<div class="t" style="left:1287px;top:81px;font-size:12px;font-weight:normal;width:78px;text-align:right;letter-spacing:-0.75px;word-spacing:2px">7.786</div>
<div style="left:1367px;top:74px;width:80px;height:25px;background:#fff;border-right:1px solid #c8c8c8;border-bottom:1px solid #c8c8c8"></div>
<div class="t" style="left:1367px;top:81px;font-size:12px;font-weight:normal;width:78px;text-align:right;letter-spacing:-0.75px;word-spacing:2px">54.272</div>
<div style="left:1447px;top:74px;width:80px;height:25px;background:#fff;border-right:1px solid #c8c8c8;border-bottom:1px solid #c8c8c8"></div>
<div class="t" style="left:1447px;top:81px;font-size:12px;font-weight:normal;width:78px;text-align:right;letter-spacing:-0.75px;word-spacing:2px">53.480</div>
<div style="left:1527px;top:74px;width:80px;height:25px;background:#fff;border-right:1px solid #c8c8c8;border-bottom:1px solid #c8c8c8"></div>
<div class="t" style="left:1527px;top:81px;font-size:12px;font-weight:normal;width:78px;text-align:right;letter-spacing:-0.75px;word-spacing:2px">6.768</div>
<div style="left:1607px;top:74px;width:80px;height:25px;background:#fff;border-right:1px solid #c8c8c8;border-bottom:1px solid #c8c8c8"></div>
<div class="t" style="left:1607px;top:81px;font-size:12px;font-weight:normal;width:78px;text-align:right;letter-spacing:-0.75px;word-spacing:2px">27.854</div>
<div style="left:1687px;top:74px;width:80px;height:25px;background:#fff;border-right:1px solid #c8c8c8;border-bottom:1px solid #c8c8c8"></div>
<div class="t" style="left:1687px;top:81px;font-size:12px;font-weight:normal;width:78px;text-align:right;letter-spacing:-0.75px;word-spacing:2px">13.760</div>
<div style="left:0px;top:99px;width:87px;height:25px;background:#f0f0f0;border-right:1px solid #a0a0a0;border-bottom:1px solid #a0a0a0"></div>
<div class="t" style="left:0px;top:106px;font-weight:bold;font-size:12px;width:86px;text-align:center;letter-spacing:-0.25px">Delta E</div>
<div style="left:87px;top:99px;width:80px;height:25px;background:#aefda8;border-right:1px solid #c8c8c8;border-bottom:1px solid #c8c8c8"></div>
<div class="t" style="left:87px;top:106px;font-size:12px;font-weight:bold;width:78px;text-align:right;letter-spacing:-0.1px;word-spacing:2px">0.9</div>
<div style="left:167px;top:99px;width:80px;height:25px;background:#aefda8;border-right:1px solid #c8c8c8;border-bottom:1px solid #c8c8c8"></div>
<div class="t" style="left:167px;top:106px;font-size:12px;font-weight:bold;width:78px;text-align:right;letter-spacing:-0.1px;word-spacing:2px">1.1</div>
<div style="left:247px;top:99px;width:80px;height:25px;background:#aefda8;border-right:1px solid #c8c8c8;border-bottom:1px solid #c8c8c8"></div>
<div class="t" style="left:247px;top:106px;font-size:12px;font-weight:bold;width:78px;text-align:right;letter-spacing:-0.1px;word-spacing:2px">0.7</div>
<div style="left:327px;top:99px;width:80px;height:25px;background:#aefda8;border-right:1px solid #c8c8c8;border-bottom:1px solid #c8c8c8"></div>
<div class="t" style="left:327px;top:106px;font-size:12px;font-weight:bold;width:78px;text-align:right;letter-spacing:-0.1px;word-spacing:2px">0.7</div>
<div style="left:407px;top:99px;width:80px;height:25px;background:#aefda8;border-right:1px solid #c8c8c8;border-bottom:1px solid #c8c8c8"></div>
<div class="t" style="left:407px;top:106px;font-size:12px;font-weight:bold;width:78px;text-align:right;letter-spacing:-0.1px;word-spacing:2px">1.0</div>
<div style="left:487px;top:99px;width:80px;height:25px;background:#aefda8;border-right:1px solid #c8c8c8;border-bottom:1px solid #c8c8c8"></div>
<div class="t" style="left:487px;top:106px;font-size:12px;font-weight:bold;width:78px;text-align:right;letter-spacing:-0.1px;word-spacing:2px">1.2</div>
<div style="left:567px;top:99px;width:80px;height:25px;background:#fdaaaa;border-right:1px solid #c8c8c8;border-bottom:1px solid #c8c8c8"></div>
<div class="t" style="left:567px;top:106px;font-size:12px;font-weight:bold;width:78px;text-align:right;letter-spacing:-0.1px;word-spacing:2px">3.8</div>
<div style="left:647px;top:99px;width:80px;height:25px;background:#fdfdae;border-right:1px solid #c8c8c8;border-bottom:1px solid #c8c8c8"></div>
<div class="t" style="left:647px;top:106px;font-size:12px;font-weight:bold;width:78px;text-align:right;letter-spacing:-0.1px;word-spacing:2px">2.5</div>
<div style="left:727px;top:99px;width:80px;height:25px;background:#fdfdae;border-right:1px solid #c8c8c8;border-bottom:1px solid #c8c8c8"></div>
<div class="t" style="left:727px;top:106px;font-size:12px;font-weight:bold;width:78px;text-align:right;letter-spacing:-0.1px;word-spacing:2px">2.0</div>
<div style="left:807px;top:99px;width:80px;height:25px;background:#fdaaaa;border-right:1px solid #c8c8c8;border-bottom:1px solid #c8c8c8"></div>
<div class="t" style="left:807px;top:106px;font-size:12px;font-weight:bold;width:78px;text-align:right;letter-spacing:-0.1px;word-spacing:2px">3.2</div>
<div style="left:887px;top:99px;width:80px;height:25px;background:#aefda8;border-right:1px solid #c8c8c8;border-bottom:1px solid #c8c8c8"></div>
<div class="t" style="left:887px;top:106px;font-size:12px;font-weight:bold;width:78px;text-align:right;letter-spacing:-0.1px;word-spacing:2px">1.9</div>
<div style="left:967px;top:99px;width:80px;height:25px;background:#aefda8;border-right:1px solid #c8c8c8;border-bottom:1px solid #c8c8c8"></div>
<div class="t" style="left:967px;top:106px;font-size:12px;font-weight:bold;width:78px;text-align:right;letter-spacing:-0.1px;word-spacing:2px">1.1</div>
<div style="left:1047px;top:99px;width:80px;height:25px;background:#fdaaaa;border-right:1px solid #c8c8c8;border-bottom:1px solid #c8c8c8"></div>
<div class="t" style="left:1047px;top:106px;font-size:12px;font-weight:bold;width:78px;text-align:right;letter-spacing:-0.1px;word-spacing:2px">3.0</div>
<div style="left:1127px;top:99px;width:80px;height:25px;background:#fdfdae;border-right:1px solid #c8c8c8;border-bottom:1px solid #c8c8c8"></div>
<div class="t" style="left:1127px;top:106px;font-size:12px;font-weight:bold;width:78px;text-align:right;letter-spacing:-0.1px;word-spacing:2px">2.4</div>
<div style="left:1207px;top:99px;width:80px;height:25px;background:#fdaaaa;border-right:1px solid #c8c8c8;border-bottom:1px solid #c8c8c8"></div>
<div class="t" style="left:1207px;top:106px;font-size:12px;font-weight:bold;width:78px;text-align:right;letter-spacing:-0.1px;word-spacing:2px">3.7</div>
<div style="left:1287px;top:99px;width:80px;height:25px;background:#aefda8;border-right:1px solid #c8c8c8;border-bottom:1px solid #c8c8c8"></div>
<div class="t" style="left:1287px;top:106px;font-size:12px;font-weight:bold;width:78px;text-align:right;letter-spacing:-0.1px;word-spacing:2px">1.9</div>
<div style="left:1367px;top:99px;width:80px;height:25px;background:#fdfdae;border-right:1px solid #c8c8c8;border-bottom:1px solid #c8c8c8"></div>
<div class="t" style="left:1367px;top:106px;font-size:12px;font-weight:bold;width:78px;text-align:right;letter-spacing:-0.1px;word-spacing:2px">2.1</div>
<div style="left:1447px;top:99px;width:80px;height:25px;background:#fdfdae;border-right:1px solid #c8c8c8;border-bottom:1px solid #c8c8c8"></div>
<div class="t" style="left:1447px;top:106px;font-size:12px;font-weight:bold;width:78px;text-align:right;letter-spacing:-0.1px;word-spacing:2px">2.9</div>
<div style="left:1527px;top:99px;width:80px;height:25px;background:#fdfdae;border-right:1px solid #c8c8c8;border-bottom:1px solid #c8c8c8"></div>
<div class="t" style="left:1527px;top:106px;font-size:12px;font-weight:bold;width:78px;text-align:right;letter-spacing:-0.1px;word-spacing:2px">2.0</div>
<div style="left:1607px;top:99px;width:80px;height:25px;background:#fdfdae;border-right:1px solid #c8c8c8;border-bottom:1px solid #c8c8c8"></div>
<div class="t" style="left:1607px;top:106px;font-size:12px;font-weight:bold;width:78px;text-align:right;letter-spacing:-0.1px;word-spacing:2px">2.0</div>
<div style="left:1687px;top:99px;width:80px;height:25px;background:#fdaaaa;border-right:1px solid #c8c8c8;border-bottom:1px solid #c8c8c8"></div>
<div class="t" style="left:1687px;top:106px;font-size:12px;font-weight:bold;width:78px;text-align:right;letter-spacing:-0.1px;word-spacing:2px">4.9</div>
<div style="left:0px;top:124px;width:87px;height:25px;background:#f0f0f0;border-right:1px solid #a0a0a0;border-bottom:1px solid #a0a0a0"></div>
<div class="t" style="left:0px;top:131px;font-weight:bold;font-size:12px;width:86px;text-align:center;letter-spacing:-0.25px">delta xy</div>
<div style="left:87px;top:124px;width:80px;height:25px;background:#f0f0f0;border-right:1px solid #c8c8c8;border-bottom:1px solid #c8c8c8"></div>
<div class="t" style="left:87px;top:131px;font-size:12px;font-weight:normal;width:78px;text-align:right;letter-spacing:-0.75px;word-spacing:2px">0.1587</div>
<div style="left:167px;top:124px;width:80px;height:25px;background:#f0f0f0;border-right:1px solid #c8c8c8;border-bottom:1px solid #c8c8c8"></div>
<div class="t" style="left:167px;top:131px;font-size:12px;font-weight:normal;width:78px;text-align:right;letter-spacing:-0.75px;word-spacing:2px">0.0016</div>
<div style="left:247px;top:124px;width:80px;height:25px;background:#f0f0f0;border-right:1px solid #c8c8c8;border-bottom:1px solid #c8c8c8"></div>
<div class="t" style="left:247px;top:131px;font-size:12px;font-weight:normal;width:78px;text-align:right;letter-spacing:-0.75px;word-spacing:2px">0.0007</div>
<div style="left:327px;top:124px;width:80px;height:25px;background:#f0f0f0;border-right:1px solid #c8c8c8;border-bottom:1px solid #c8c8c8"></div>
<div class="t" style="left:327px;top:131px;font-size:12px;font-weight:normal;width:78px;text-align:right;letter-spacing:-0.75px;word-spacing:2px">0.0019</div>
<div style="left:407px;top:124px;width:80px;height:25px;background:#f0f0f0;border-right:1px solid #c8c8c8;border-bottom:1px solid #c8c8c8"></div>
<div class="t" style="left:407px;top:131px;font-size:12px;font-weight:normal;width:78px;text-align:right;letter-spacing:-0.75px;word-spacing:2px">0.0028</div>
<div style="left:487px;top:124px;width:80px;height:25px;background:#f0f0f0;border-right:1px solid #c8c8c8;border-bottom:1px solid #c8c8c8"></div>
<div class="t" style="left:487px;top:131px;font-size:12px;font-weight:normal;width:78px;text-align:right;letter-spacing:-0.75px;word-spacing:2px">0.0031</div>
<div style="left:567px;top:124px;width:80px;height:25px;background:#f0f0f0;border-right:1px solid #c8c8c8;border-bottom:1px solid #c8c8c8"></div>
<div class="t" style="left:567px;top:131px;font-size:12px;font-weight:normal;width:78px;text-align:right;letter-spacing:-0.75px;word-spacing:2px">0.0335</div>
<div style="left:647px;top:124px;width:80px;height:25px;background:#f0f0f0;border-right:1px solid #c8c8c8;border-bottom:1px solid #c8c8c8"></div>
<div class="t" style="left:647px;top:131px;font-size:12px;font-weight:normal;width:78px;text-align:right;letter-spacing:-0.75px;word-spacing:2px">0.0158</div>
<div style="left:727px;top:124px;width:80px;height:25px;background:#f0f0f0;border-right:1px solid #c8c8c8;border-bottom:1px solid #c8c8c8"></div>
<div class="t" style="left:727px;top:131px;font-size:12px;font-weight:normal;width:78px;text-align:right;letter-spacing:-0.75px;word-spacing:2px">0.0112</div>
<div style="left:807px;top:124px;width:80px;height:25px;background:#f0f0f0;border-right:1px solid #c8c8c8;border-bottom:1px solid #c8c8c8"></div>
<div class="t" style="left:807px;top:131px;font-size:12px;font-weight:normal;width:78px;text-align:right;letter-spacing:-0.75px;word-spacing:2px">0.0282</div>
<div style="left:887px;top:124px;width:80px;height:25px;background:#f0f0f0;border-right:1px solid #c8c8c8;border-bottom:1px solid #c8c8c8"></div>
<div class="t" style="left:887px;top:131px;font-size:12px;font-weight:normal;width:78px;text-align:right;letter-spacing:-0.75px;word-spacing:2px">0.0100</div>
<div style="left:967px;top:124px;width:80px;height:25px;background:#f0f0f0;border-right:1px solid #c8c8c8;border-bottom:1px solid #c8c8c8"></div>
<div class="t" style="left:967px;top:131px;font-size:12px;font-weight:normal;width:78px;text-align:right;letter-spacing:-0.75px;word-spacing:2px">0.0054</div>
<div style="left:1047px;top:124px;width:80px;height:25px;background:#f0f0f0;border-right:1px solid #c8c8c8;border-bottom:1px solid #c8c8c8"></div>
<div class="t" style="left:1047px;top:131px;font-size:12px;font-weight:normal;width:78px;text-align:right;letter-spacing:-0.75px;word-spacing:2px">0.0310</div>
<div style="left:1127px;top:124px;width:80px;height:25px;background:#f0f0f0;border-right:1px solid #c8c8c8;border-bottom:1px solid #c8c8c8"></div>
<div class="t" style="left:1127px;top:131px;font-size:12px;font-weight:normal;width:78px;text-align:right;letter-spacing:-0.75px;word-spacing:2px">0.0189</div>
<div style="left:1207px;top:124px;width:80px;height:25px;background:#f0f0f0;border-right:1px solid #c8c8c8;border-bottom:1px solid #c8c8c8"></div>
<div class="t" style="left:1207px;top:131px;font-size:12px;font-weight:normal;width:78px;text-align:right;letter-spacing:-0.75px;word-spacing:2px">0.0357</div>
<div style="left:1287px;top:124px;width:80px;height:25px;background:#f0f0f0;border-right:1px solid #c8c8c8;border-bottom:1px solid #c8c8c8"></div>
<div class="t" style="left:1287px;top:131px;font-size:12px;font-weight:normal;width:78px;text-align:right;letter-spacing:-0.75px;word-spacing:2px">0.0092</div>
<div style="left:1367px;top:124px;width:80px;height:25px;background:#f0f0f0;border-right:1px solid #c8c8c8;border-bottom:1px solid #c8c8c8"></div>
<div class="t" style="left:1367px;top:131px;font-size:12px;font-weight:normal;width:78px;text-align:right;letter-spacing:-0.75px;word-spacing:2px">0.0182</div>
<div style="left:1447px;top:124px;width:80px;height:25px;background:#f0f0f0;border-right:1px solid #c8c8c8;border-bottom:1px solid #c8c8c8"></div>
<div class="t" style="left:1447px;top:131px;font-size:12px;font-weight:normal;width:78px;text-align:right;letter-spacing:-0.75px;word-spacing:2px">0.0227</div>
<div style="left:1527px;top:124px;width:80px;height:25px;background:#f0f0f0;border-right:1px solid #c8c8c8;border-bottom:1px solid #c8c8c8"></div>
<div class="t" style="left:1527px;top:131px;font-size:12px;font-weight:normal;width:78px;text-align:right;letter-spacing:-0.75px;word-spacing:2px">0.0184</div>
<div style="left:1607px;top:124px;width:80px;height:25px;background:#f0f0f0;border-right:1px solid #c8c8c8;border-bottom:1px solid #c8c8c8"></div>
<div class="t" style="left:1607px;top:131px;font-size:12px;font-weight:normal;width:78px;text-align:right;letter-spacing:-0.75px;word-spacing:2px">0.0245</div>
<div style="left:1687px;top:124px;width:80px;height:25px;background:#f0f0f0;border-right:1px solid #c8c8c8;border-bottom:1px solid #c8c8c8"></div>
<div class="t" style="left:1687px;top:131px;font-size:12px;font-weight:normal;width:78px;text-align:right;letter-spacing:-0.75px;word-spacing:2px">0.0504</div>
<div style="left:0px;top:149px;width:87px;height:25px;background:#f0f0f0;border-right:1px solid #a0a0a0;border-bottom:1px solid #a0a0a0"></div>
<div class="t" style="left:0px;top:156px;font-weight:bold;font-size:12px;width:86px;text-align:center;letter-spacing:-0.25px">delta L</div>
<div style="left:87px;top:149px;width:80px;height:25px;background:#e2e2e2;border-right:1px solid #c8c8c8;border-bottom:1px solid #c8c8c8"></div>
<div class="t" style="left:87px;top:156px;font-size:12px;font-weight:normal;width:78px;text-align:right;letter-spacing:-0.75px;word-spacing:2px">+inf %</div>
<div style="left:167px;top:149px;width:80px;height:25px;background:#e2e2e2;border-right:1px solid #c8c8c8;border-bottom:1px solid #c8c8c8"></div>
<div class="t" style="left:167px;top:156px;font-size:12px;font-weight:normal;width:78px;text-align:right;letter-spacing:-0.75px;word-spacing:2px">+4.0 %</div>
<div style="left:247px;top:149px;width:80px;height:25px;background:#e2e2e2;border-right:1px solid #c8c8c8;border-bottom:1px solid #c8c8c8"></div>
<div class="t" style="left:247px;top:156px;font-size:12px;font-weight:normal;width:78px;text-align:right;letter-spacing:-0.75px;word-spacing:2px">+2.1 %</div>
<div style="left:327px;top:149px;width:80px;height:25px;background:#e2e2e2;border-right:1px solid #c8c8c8;border-bottom:1px solid #c8c8c8"></div>
<div class="t" style="left:327px;top:156px;font-size:12px;font-weight:normal;width:78px;text-align:right;letter-spacing:-0.75px;word-spacing:2px">+0.9 %</div>
<div style="left:407px;top:149px;width:80px;height:25px;background:#e2e2e2;border-right:1px solid #c8c8c8;border-bottom:1px solid #c8c8c8"></div>
<div class="t" style="left:407px;top:156px;font-size:12px;font-weight:normal;width:78px;text-align:right;letter-spacing:-0.75px;word-spacing:2px">+0.6 %</div>
<div style="left:487px;top:149px;width:80px;height:25px;background:#e2e2e2;border-right:1px solid #c8c8c8;border-bottom:1px solid #c8c8c8"></div>
<div class="t" style="left:487px;top:156px;font-size:12px;font-weight:normal;width:78px;text-align:right;letter-spacing:-0.75px;word-spacing:2px">=</div>
<div style="left:567px;top:149px;width:80px;height:25px;background:#e2e2e2;border-right:1px solid #c8c8c8;border-bottom:1px solid #c8c8c8"></div>
<div class="t" style="left:567px;top:156px;font-size:12px;font-weight:normal;width:78px;text-align:right;letter-spacing:-0.75px;word-spacing:2px">+14.9 %</div>
<div style="left:647px;top:149px;width:80px;height:25px;background:#e2e2e2;border-right:1px solid #c8c8c8;border-bottom:1px solid #c8c8c8"></div>
<div class="t" style="left:647px;top:156px;font-size:12px;font-weight:normal;width:78px;text-align:right;letter-spacing:-0.75px;word-spacing:2px">+4.2 %</div>
<div style="left:727px;top:149px;width:80px;height:25px;background:#e2e2e2;border-right:1px solid #c8c8c8;border-bottom:1px solid #c8c8c8"></div>
<div class="t" style="left:727px;top:156px;font-size:12px;font-weight:normal;width:78px;text-align:right;letter-spacing:-0.75px;word-spacing:2px">+5.5 %</div>
<div style="left:807px;top:149px;width:80px;height:25px;background:#e2e2e2;border-right:1px solid #c8c8c8;border-bottom:1px solid #c8c8c8"></div>
<div class="t" style="left:807px;top:156px;font-size:12px;font-weight:normal;width:78px;text-align:right;letter-spacing:-0.75px;word-spacing:2px">+11.0 %</div>
<div style="left:887px;top:149px;width:80px;height:25px;background:#e2e2e2;border-right:1px solid #c8c8c8;border-bottom:1px solid #c8c8c8"></div>
<div class="t" style="left:887px;top:156px;font-size:12px;font-weight:normal;width:78px;text-align:right;letter-spacing:-0.75px;word-spacing:2px">+4.6 %</div>
<div style="left:967px;top:149px;width:80px;height:25px;background:#e2e2e2;border-right:1px solid #c8c8c8;border-bottom:1px solid #c8c8c8"></div>
<div class="t" style="left:967px;top:156px;font-size:12px;font-weight:normal;width:78px;text-align:right;letter-spacing:-0.75px;word-spacing:2px">+0.6 %</div>
<div style="left:1047px;top:149px;width:80px;height:25px;background:#e2e2e2;border-right:1px solid #c8c8c8;border-bottom:1px solid #c8c8c8"></div>
<div class="t" style="left:1047px;top:156px;font-size:12px;font-weight:normal;width:78px;text-align:right;letter-spacing:-0.75px;word-spacing:2px">+3.1 %</div>
<div style="left:1127px;top:149px;width:80px;height:25px;background:#e2e2e2;border-right:1px solid #c8c8c8;border-bottom:1px solid #c8c8c8"></div>
<div class="t" style="left:1127px;top:156px;font-size:12px;font-weight:normal;width:78px;text-align:right;letter-spacing:-0.75px;word-spacing:2px">+6.3 %</div>
<div style="left:1207px;top:149px;width:80px;height:25px;background:#e2e2e2;border-right:1px solid #c8c8c8;border-bottom:1px solid #c8c8c8"></div>
<div class="t" style="left:1207px;top:156px;font-size:12px;font-weight:normal;width:78px;text-align:right;letter-spacing:-0.75px;word-spacing:2px">+5.2 %</div>
<div style="left:1287px;top:149px;width:80px;height:25px;background:#e2e2e2;border-right:1px solid #c8c8c8;border-bottom:1px solid #c8c8c8"></div>
<div class="t" style="left:1287px;top:156px;font-size:12px;font-weight:normal;width:78px;text-align:right;letter-spacing:-0.75px;word-spacing:2px">+16.8 %</div>
<div style="left:1367px;top:149px;width:80px;height:25px;background:#e2e2e2;border-right:1px solid #c8c8c8;border-bottom:1px solid #c8c8c8"></div>
<div class="t" style="left:1367px;top:156px;font-size:12px;font-weight:normal;width:78px;text-align:right;letter-spacing:-0.75px;word-spacing:2px">+2.4 %</div>
<div style="left:1447px;top:149px;width:80px;height:25px;background:#e2e2e2;border-right:1px solid #c8c8c8;border-bottom:1px solid #c8c8c8"></div>
<div class="t" style="left:1447px;top:156px;font-size:12px;font-weight:normal;width:78px;text-align:right;letter-spacing:-0.75px;word-spacing:2px">+2.1 %</div>
<div style="left:1527px;top:149px;width:80px;height:25px;background:#e2e2e2;border-right:1px solid #c8c8c8;border-bottom:1px solid #c8c8c8"></div>
<div class="t" style="left:1527px;top:156px;font-size:12px;font-weight:normal;width:78px;text-align:right;letter-spacing:-0.75px;word-spacing:2px">+7.1 %</div>
<div style="left:1607px;top:149px;width:80px;height:25px;background:#e2e2e2;border-right:1px solid #c8c8c8;border-bottom:1px solid #c8c8c8"></div>
<div class="t" style="left:1607px;top:156px;font-size:12px;font-weight:normal;width:78px;text-align:right;letter-spacing:-0.75px;word-spacing:2px">+3.5 %</div>
<div style="left:1687px;top:149px;width:80px;height:25px;background:#e2e2e2;border-right:1px solid #c8c8c8;border-bottom:1px solid #c8c8c8"></div>
<div class="t" style="left:1687px;top:156px;font-size:12px;font-weight:normal;width:78px;text-align:right;letter-spacing:-0.75px;word-spacing:2px">+2.8 %</div>
<div style="left:0px;top:174px;width:87px;height:10px;background:#f0f0f0;border-right:1px solid #a0a0a0"></div>
<div style="left:87px;top:174px;width:80px;height:10px;background:#fff;border-right:1px solid #c8c8c8"></div>
<div style="left:167px;top:174px;width:80px;height:10px;background:#fff;border-right:1px solid #c8c8c8"></div>
<div style="left:247px;top:174px;width:80px;height:10px;background:#fff;border-right:1px solid #c8c8c8"></div>
<div style="left:327px;top:174px;width:80px;height:10px;background:#fff;border-right:1px solid #c8c8c8"></div>
<div style="left:407px;top:174px;width:80px;height:10px;background:#fff;border-right:1px solid #c8c8c8"></div>
<div style="left:487px;top:174px;width:80px;height:10px;background:#fff;border-right:1px solid #c8c8c8"></div>
<div style="left:567px;top:174px;width:80px;height:10px;background:#fff;border-right:1px solid #c8c8c8"></div>
<div style="left:647px;top:174px;width:80px;height:10px;background:#fff;border-right:1px solid #c8c8c8"></div>
<div style="left:727px;top:174px;width:80px;height:10px;background:#fff;border-right:1px solid #c8c8c8"></div>
<div style="left:807px;top:174px;width:80px;height:10px;background:#fff;border-right:1px solid #c8c8c8"></div>
<div style="left:887px;top:174px;width:80px;height:10px;background:#fff;border-right:1px solid #c8c8c8"></div>
<div style="left:967px;top:174px;width:80px;height:10px;background:#fff;border-right:1px solid #c8c8c8"></div>
<div style="left:1047px;top:174px;width:80px;height:10px;background:#fff;border-right:1px solid #c8c8c8"></div>
<div style="left:1127px;top:174px;width:80px;height:10px;background:#fff;border-right:1px solid #c8c8c8"></div>
<div style="left:1207px;top:174px;width:80px;height:10px;background:#fff;border-right:1px solid #c8c8c8"></div>
<div style="left:1287px;top:174px;width:80px;height:10px;background:#fff;border-right:1px solid #c8c8c8"></div>
<div style="left:1367px;top:174px;width:80px;height:10px;background:#fff;border-right:1px solid #c8c8c8"></div>
<div style="left:1447px;top:174px;width:80px;height:10px;background:#fff;border-right:1px solid #c8c8c8"></div>
<div style="left:1527px;top:174px;width:80px;height:10px;background:#fff;border-right:1px solid #c8c8c8"></div>
<div style="left:1607px;top:174px;width:80px;height:10px;background:#fff;border-right:1px solid #c8c8c8"></div>
<div style="left:1687px;top:174px;width:80px;height:10px;background:#fff;border-right:1px solid #c8c8c8"></div>
</div>
<div style="left:1771px;top:220px;width:17px;height:178px;background:#f0f0f0"></div>
<div style="left:1772px;top:238px;width:15px;height:126px;background:#cdcdcd"></div>
<svg style="left:1775px;top:227px" width="10" height="8"><path d="M1 6L5 2L9 6" fill="none" stroke="#606060" stroke-width="1.5"/></svg>
<svg style="left:1775px;top:385px" width="10" height="8"><path d="M1 2L5 6L9 2" fill="none" stroke="#606060" stroke-width="1.5"/></svg>
<div style="left:9px;top:397px;width:1779px;height:18px;background:#f0f0f0"></div>
<div style="left:27px;top:400px;width:1508px;height:14px;background:#cdcdcd"></div>
<svg style="left:13px;top:402px" width="8" height="10"><path d="M6 1L2 5L6 9" fill="none" stroke="#606060" stroke-width="1.5"/></svg>
<svg style="left:1758px;top:402px" width="8" height="10"><path d="M2 1L6 5L2 9" fill="none" stroke="#606060" stroke-width="1.5"/></svg>
<div style="left:1808px;top:203px;width:3px;height:225px;background:#fff"></div>
<div style="left:1811px;top:203px;width:86px;height:222px;background:#8a8a8a"></div>
<div style="left:1815px;top:205px;width:81px;height:99px;background:#6e6e6e;border-radius:5px 5px 0 0"></div>
<div style="left:1893px;top:208px;width:1px;height:95px;background:#9a9a9a"></div>
<div style="left:1816px;top:206px;width:78px;height:96px;background:#e8e8e8"></div>
<div style="left:1816px;top:206px;width:78px;height:17px;background:linear-gradient(#e8eef8,#e1e8f2);border-radius:4px 4px 0 0"></div>
<div style="left:1816px;top:223px;width:78px;height:1px;background:#8c8c8c"></div>
<div class="t" style="left:1822px;top:209px;font-weight:bold;font-size:12px;color:#3c3c3c;letter-spacing:0.75px">Display</div>
<div style="left:1816px;top:224px;width:79px;height:79px;background:#e8e8e8;border:1px solid #8c8c8c;border-top:none"></div>
<svg style="left:1822px;top:225px" width="12" height="12"><circle cx="6" cy="6" r="5" fill="#fff" stroke="#c8c8c8"/></svg>
<div class="t" style="left:1840px;top:225px;font-size:13.8px;color:#a8a8a8">Sensor</div>
<svg style="left:1822px;top:241px" width="12" height="12"><circle cx="6" cy="6" r="5" fill="#fff" stroke="#555"/></svg>
<div class="t" style="left:1840px;top:241px;font-size:13.8px;color:#000">RGB</div>
<svg style="left:1822px;top:257px" width="12" height="12"><circle cx="6" cy="6" r="5" fill="#fff" stroke="#555"/></svg>
<div class="t" style="left:1840px;top:257px;font-size:13.8px;color:#000">XYZ</div>
<svg style="left:1822px;top:273px" width="12" height="12"><circle cx="6" cy="6" r="5" fill="#fff" stroke="#555"/></svg>
<div class="t" style="left:1840px;top:273px;font-size:13.8px;color:#000">xyz</div>
<svg style="left:1822px;top:289px" width="12" height="12"><circle cx="6" cy="6" r="5" fill="#fff" stroke="#555"/><circle cx="6" cy="6" r="2.2" fill="#000"/></svg>
<div class="t" style="left:1840px;top:289px;font-size:13.8px;color:#000">xyY</div>
<div style="left:1812px;top:307px;width:83px;height:30px;background:#e8e8e8;border:1px solid #fff;border-right-color:#a0a0a0;border-bottom-color:#a0a0a0"></div>
<svg style="left:1818px;top:310px" width="33" height="27"><rect x="0" y="0" width="3" height="26" fill="#111"/><rect x="29" y="4" width="3" height="22" fill="#111"/><path d="M3 2H10L12 5V10L9 12V16L12 18V22L14 25L28 26V6H22L20 8V12L23 14V19L18 21Z" fill="#b8b8b8" stroke="#333" stroke-width="0.7"/><path d="M7 1Q15 -1 19 3L21 7L10 9Q9 4 7 3Z" fill="#e01010" stroke="#111"/><path d="M10 9L21 7L23 17L13 19Z" fill="#10c030" stroke="#111"/><path d="M13 19L23 17L29 22Q28 27 23 27L16 26Z" fill="#3090f0" stroke="#111"/></svg>
<div class="t" style="left:1863px;top:316px;font-size:14px">Go</div>
<div style="left:1812px;top:337px;width:83px;height:30px;background:#e8e8e8;border:1px solid #fff;border-right-color:#a0a0a0;border-bottom-color:#a0a0a0"></div>
<svg style="left:1819px;top:339px" width="30" height="27"><path d="M1 3Q14 -1 27 2L23 25Q13 27 5 24Z" fill="#a8d8f4" stroke="#6aaedc"/><path d="M3 4Q14 1 26 3" stroke="#e8f6ff" stroke-width="2" fill="none"/><path d="M10 14a5 5 0 0 1 8-4l1-2 1 6-5 0 2-2a3 3 0 0 0-5 3z" fill="#22a020"/><path d="M20 15a5 5 0 0 1-8 4l-1 2-1-6 5 0-2 2a3 3 0 0 0 5-3z" fill="#22a020"/></svg>
<div class="t" style="left:1851px;top:346px;font-size:14px">Delete</div>
<div style="left:1812px;top:367px;width:83px;height:30px;background:#e8e8e8;border:1px solid #fff;border-right-color:#a0a0a0;border-bottom-color:#a0a0a0"></div>
<svg style="left:1818px;top:371px" width="32" height="24"><path d="M0 23V10L3 8L5 4L8 9L10 12L13 6L15 3L18 5L20 8L22 10L24 9L26 11V23z" fill="#ffff00"/><rect x="1" y="12" width="2" height="11" fill="#e000e0"/><rect x="3" y="6" width="3" height="17" fill="#0000ff"/><rect x="6" y="10" width="3" height="13" fill="#00e0ff"/><rect x="9" y="10" width="4" height="13" fill="#00e000"/><rect x="13" y="4" width="5" height="19" fill="#ffff00"/><rect x="18" y="5" width="3" height="18" fill="#800000"/><rect x="21" y="9" width="5" height="14" fill="#ff0000"/></svg>
<div class="t" style="left:1858px;top:376px;font-size:14px">Refs</div>
<div style="left:1818px;top:401px;width:56px;height:18px;background:#f0f0f0"></div>
<div style="left:1820px;top:403px;width:13px;height:13px;background:#fff;border:1px solid #777;border-right-color:#ddd;border-bottom-color:#ddd"></div>
<div class="t" style="left:1837px;top:404px;font-size:13.5px">Edit</div>
<div style="left:2px;top:420px;width:1895px;height:10px;background:#fff"></div>
<div style="left:2px;top:421px;width:1895px;height:6px;background:#6e6e6e"></div>
<div style="left:2px;top:422px;width:1895px;height:4px;background:#8c8c8c"></div>
<div style="left:5px;top:431px;width:378px;height:584px;background:#6e6e6e;border-radius:5px 5px 0 0"></div>
<div style="left:380px;top:434px;width:1px;height:580px;background:#9a9a9a"></div>
<div style="left:6px;top:432px;width:375px;height:581px;background:#ebebeb"></div>
<div style="left:6px;top:432px;width:375px;height:16px;background:linear-gradient(#e8eef8,#e1e8f2);border-radius:4px 4px 0 0"></div>
<div style="left:6px;top:448px;width:375px;height:1px;background:#8c8c8c"></div>
<div class="t" style="left:12px;top:435px;font-weight:bold;font-size:12px;color:#3c3c3c;letter-spacing:0.75px">Selected color</div>
<div style="left:6px;top:449px;width:376px;height:1px;background:#fff"></div>
<div style="left:14px;top:452px;width:113px;height:16px;background:#f0f0f0"></div>
<div class="t" style="left:18px;top:453px;font-size:13px">RGB Levels</div>
<div style="left:14px;top:476px;width:200px;height:90px;background:#f0f0f0"></div>
<svg style="left:14px;top:520px" width="200" height="2"><path d="M0 0.5H200" stroke="#777" stroke-dasharray="3 3"/></svg>
<div class="t" style="left:26px;top:540px;font-family:'Liberation Serif',serif;font-weight:bold;font-size:11.5px;color:#000">0.0%</div>
<div class="t" style="left:77px;top:540px;font-family:'Liberation Serif',serif;font-weight:bold;font-size:11.5px;color:#000">0.0%</div>
<div class="t" style="left:128px;top:540px;font-family:'Liberation Serif',serif;font-weight:bold;font-size:11.5px;color:#000">0.0%</div>
<div class="t" style="left:175px;top:540px;font-family:'Liberation Serif',serif;font-weight:bold;font-size:11.5px;color:#000">dE 0.0</div>
<svg style="left:14px;top:550px" width="200" height="12"><path d="M0 12V7.5Q25 -2.5 50 7.5V12Z" fill="#000"/><path d="M1.5 7.5Q25 -0.5 48.5 7.5Z" fill="#a00c0c"/><path d="M50 12V7.5Q75 -2.5 100 7.5V12Z" fill="#000"/><path d="M51.5 7.5Q75 -0.5 98.5 7.5Z" fill="#0e960e"/><path d="M100 12V7.5Q125 -2.5 150 7.5V12Z" fill="#000"/><path d="M101.5 7.5Q125 -0.5 148.5 7.5Z" fill="#0c0ca8"/><path d="M150 12V7.5Q175 -2.5 200 7.5V12Z" fill="#000"/><path d="M151.5 7.5Q175 -0.5 198.5 7.5Z" fill="#c08a10"/><rect x="0" y="7" width="200" height="5" fill="#000"/></svg>
<div style="left:16px;top:576px;width:193px;height:73px;background:#f0f0f0"></div>
<div class="t" style="left:35px;top:578px;font-weight:bold;font-size:13.5px">Measure</div>
<div class="t" style="left:127px;top:578px;font-weight:bold;font-size:13.5px">Reference</div>
<div style="left:14px;top:666px;width:45px;height:16px;background:#f0f0f0"></div>
<div class="t" style="left:18px;top:667px;font-size:13px">Target</div>
<div style="left:50px;top:681px;width:116px;height:89px;border:1px solid #000;background:conic-gradient(from 0deg at 50% 50%,#3f0 0deg,#fc0 45deg,#f00 100deg,#f08 135deg,#80c 180deg,#00f 225deg,#08c 270deg,#0f8 315deg,#3f0 360deg)"></div>
<div style="left:67px;top:694px;width:81px;height:62px;background:#000;border:1px solid #fff;border-radius:9px"></div>
<svg style="left:67px;top:694px" width="82" height="63"><ellipse cx="41.5" cy="31.5" rx="21" ry="15.5" fill="none" stroke="#fff" stroke-dasharray="3 3"/><path d="M41.5 0V63M-2 31.5H85" stroke="#fff" stroke-dasharray="3 2" shape-rendering="crispEdges"/></svg>
<div style="left:229px;top:449px;width:128px;height:17px;background:#f0f0f0"></div>
<div class="t" style="left:241px;top:450px;font-size:14px">Current Measure</div>
<div style="left:220px;top:474px;width:153px;height:535px;background:#6e6e6e"></div>
<div style="left:221px;top:475px;width:151px;height:533px;background:#f0f0f0"></div>
<div style="left:221px;top:475px;width:133px;height:533px;overflow:hidden">
<div style="left:0px;top:0px;width:56px;height:23px;background:#f0f0f0;border-right:1px solid #7a7a7a;border-bottom:1px solid #a0a0a0"></div>
<div class="t" style="left:0px;top:6px;font-weight:bold;font-size:12.5px;width:56px;text-align:center">Y cd/m&sup2;</div>
<div style="left:56px;top:0px;width:77px;height:23px;background:#fff;border-bottom:1px solid #c0c0c0"></div>
<div style="left:0px;top:23px;width:56px;height:23px;background:#f0f0f0;border-right:1px solid #7a7a7a;border-bottom:1px solid #a0a0a0"></div>
<div class="t" style="left:0px;top:29px;font-weight:bold;font-size:12.5px;width:56px;text-align:center">Y ftL</div>
<div style="left:56px;top:23px;width:77px;height:23px;background:#fff;border-bottom:1px solid #c0c0c0"></div>
<div style="left:0px;top:46px;width:56px;height:23px;background:#f0f0f0;border-right:1px solid #7a7a7a;border-bottom:1px solid #a0a0a0"></div>
<div class="t" style="left:0px;top:52px;font-weight:bold;font-size:12.5px;width:56px;text-align:center">T&deg;</div>
<div style="left:56px;top:46px;width:77px;height:23px;background:#fff;border-bottom:1px solid #c0c0c0"></div>
<div style="left:0px;top:69px;width:56px;height:23px;background:#f0f0f0;border-right:1px solid #7a7a7a;border-bottom:1px solid #a0a0a0"></div>
<div class="t" style="left:0px;top:75px;font-weight:bold;font-size:12.5px;width:56px;text-align:center">X</div>
<div style="left:56px;top:69px;width:77px;height:23px;background:#dcdcdc;border-bottom:1px solid #c0c0c0"></div>
<div style="left:0px;top:92px;width:56px;height:23px;background:#f0f0f0;border-right:1px solid #7a7a7a;border-bottom:1px solid #a0a0a0"></div>
<div class="t" style="left:0px;top:98px;font-weight:bold;font-size:12.5px;width:56px;text-align:center">Y</div>
<div style="left:56px;top:92px;width:77px;height:23px;background:#dcdcdc;border-bottom:1px solid #c0c0c0"></div>
<div style="left:0px;top:115px;width:56px;height:23px;background:#f0f0f0;border-right:1px solid #7a7a7a;border-bottom:1px solid #a0a0a0"></div>
<div class="t" style="left:0px;top:121px;font-weight:bold;font-size:12.5px;width:56px;text-align:center">Z</div>
<div style="left:56px;top:115px;width:77px;height:23px;background:#dcdcdc;border-bottom:1px solid #c0c0c0"></div>
<div style="left:0px;top:138px;width:56px;height:23px;background:#f0f0f0;border-right:1px solid #7a7a7a;border-bottom:1px solid #a0a0a0"></div>
<div class="t" style="left:0px;top:144px;font-weight:bold;font-size:12.5px;width:56px;text-align:center">R</div>
<div style="left:56px;top:138px;width:77px;height:23px;background:#fff;border-bottom:1px solid #c0c0c0"></div>
<div style="left:0px;top:161px;width:56px;height:23px;background:#f0f0f0;border-right:1px solid #7a7a7a;border-bottom:1px solid #a0a0a0"></div>
<div class="t" style="left:0px;top:167px;font-weight:bold;font-size:12.5px;width:56px;text-align:center">G</div>
<div style="left:56px;top:161px;width:77px;height:23px;background:#fff;border-bottom:1px solid #c0c0c0"></div>
<div style="left:0px;top:184px;width:56px;height:23px;background:#f0f0f0;border-right:1px solid #7a7a7a;border-bottom:1px solid #a0a0a0"></div>
<div class="t" style="left:0px;top:190px;font-weight:bold;font-size:12.5px;width:56px;text-align:center">B</div>
<div style="left:56px;top:184px;width:77px;height:23px;background:#fff;border-bottom:1px solid #c0c0c0"></div>
<div style="left:0px;top:207px;width:56px;height:23px;background:#f0f0f0;border-right:1px solid #7a7a7a;border-bottom:1px solid #a0a0a0"></div>
<div class="t" style="left:0px;top:213px;font-weight:bold;font-size:12.5px;width:56px;text-align:center">x</div>
<div style="left:56px;top:207px;width:77px;height:23px;background:#dcdcdc;border-bottom:1px solid #c0c0c0"></div>
<div style="left:0px;top:230px;width:56px;height:23px;background:#f0f0f0;border-right:1px solid #7a7a7a;border-bottom:1px solid #a0a0a0"></div>
<div class="t" style="left:0px;top:236px;font-weight:bold;font-size:12.5px;width:56px;text-align:center">y</div>
<div style="left:56px;top:230px;width:77px;height:23px;background:#dcdcdc;border-bottom:1px solid #c0c0c0"></div>
<div style="left:0px;top:253px;width:56px;height:23px;background:#f0f0f0;border-right:1px solid #7a7a7a;border-bottom:1px solid #a0a0a0"></div>
<div class="t" style="left:0px;top:259px;font-weight:bold;font-size:12.5px;width:56px;text-align:center">Y</div>
<div style="left:56px;top:253px;width:77px;height:23px;background:#dcdcdc;border-bottom:1px solid #c0c0c0"></div>
<div style="left:0px;top:276px;width:56px;height:23px;background:#f0f0f0;border-right:1px solid #7a7a7a;border-bottom:1px solid #a0a0a0"></div>
<div class="t" style="left:0px;top:282px;font-weight:bold;font-size:12.5px;width:56px;text-align:center">x</div>
<div style="left:56px;top:276px;width:77px;height:23px;background:#fff;border-bottom:1px solid #c0c0c0"></div>
<div style="left:0px;top:299px;width:56px;height:23px;background:#f0f0f0;border-right:1px solid #7a7a7a;border-bottom:1px solid #a0a0a0"></div>
<div class="t" style="left:0px;top:305px;font-weight:bold;font-size:12.5px;width:56px;text-align:center">y</div>
<div style="left:56px;top:299px;width:77px;height:23px;background:#fff;border-bottom:1px solid #c0c0c0"></div>
<div style="left:0px;top:322px;width:56px;height:23px;background:#f0f0f0;border-right:1px solid #7a7a7a;border-bottom:1px solid #a0a0a0"></div>
<div class="t" style="left:0px;top:328px;font-weight:bold;font-size:12.5px;width:56px;text-align:center">z</div>
<div style="left:56px;top:322px;width:77px;height:23px;background:#fff;border-bottom:1px solid #c0c0c0"></div>
<div style="left:0px;top:345px;width:56px;height:23px;background:#f0f0f0;border-right:1px solid #7a7a7a;border-bottom:1px solid #a0a0a0"></div>
<div class="t" style="left:0px;top:351px;font-weight:bold;font-size:12.5px;width:56px;text-align:center">L</div>
<div style="left:56px;top:345px;width:77px;height:23px;background:#dcdcdc;border-bottom:1px solid #c0c0c0"></div>
<div style="left:0px;top:368px;width:56px;height:23px;background:#f0f0f0;border-right:1px solid #7a7a7a;border-bottom:1px solid #a0a0a0"></div>
<div class="t" style="left:0px;top:374px;font-weight:bold;font-size:12.5px;width:56px;text-align:center">a</div>
<div style="left:56px;top:368px;width:77px;height:23px;background:#dcdcdc;border-bottom:1px solid #c0c0c0"></div>
<div style="left:0px;top:391px;width:56px;height:23px;background:#f0f0f0;border-right:1px solid #7a7a7a;border-bottom:1px solid #a0a0a0"></div>
<div class="t" style="left:0px;top:397px;font-weight:bold;font-size:12.5px;width:56px;text-align:center">b</div>
<div style="left:56px;top:391px;width:77px;height:23px;background:#dcdcdc;border-bottom:1px solid #c0c0c0"></div>
<div style="left:0px;top:414px;width:56px;height:23px;background:#f0f0f0;border-right:1px solid #7a7a7a;border-bottom:1px solid #a0a0a0"></div>
<div class="t" style="left:0px;top:420px;font-weight:bold;font-size:12.5px;width:56px;text-align:center">L</div>
<div style="left:56px;top:414px;width:77px;height:23px;background:#fff;border-bottom:1px solid #c0c0c0"></div>
<div style="left:0px;top:437px;width:56px;height:23px;background:#f0f0f0;border-right:1px solid #7a7a7a;border-bottom:1px solid #a0a0a0"></div>
<div class="t" style="left:0px;top:443px;font-weight:bold;font-size:12.5px;width:56px;text-align:center">C</div>
<div style="left:56px;top:437px;width:77px;height:23px;background:#fff;border-bottom:1px solid #c0c0c0"></div>
<div style="left:0px;top:460px;width:56px;height:23px;background:#f0f0f0;border-right:1px solid #7a7a7a;border-bottom:1px solid #a0a0a0"></div>
<div class="t" style="left:0px;top:466px;font-weight:bold;font-size:12.5px;width:56px;text-align:center">H</div>
<div style="left:56px;top:460px;width:77px;height:23px;background:#fff;border-bottom:1px solid #c0c0c0"></div>
<div style="left:0px;top:483px;width:56px;height:23px;background:#f0f0f0;border-right:1px solid #7a7a7a;border-bottom:1px solid #a0a0a0"></div>
<div class="t" style="left:0px;top:489px;font-weight:bold;font-size:12.5px;width:56px;text-align:center">L</div>
<div style="left:56px;top:483px;width:77px;height:23px;background:#dcdcdc;border-bottom:1px solid #c0c0c0"></div>
<div style="left:0px;top:506px;width:56px;height:23px;background:#f0f0f0;border-right:1px solid #7a7a7a;border-bottom:1px solid #a0a0a0"></div>
<div class="t" style="left:0px;top:512px;font-weight:bold;font-size:12.5px;width:56px;text-align:center">M</div>
<div style="left:56px;top:506px;width:77px;height:23px;background:#dcdcdc;border-bottom:1px solid #c0c0c0"></div>
<div style="left:0px;top:529px;width:56px;height:10px;background:#f0f0f0;border-right:1px solid #7a7a7a"></div>
</div>
<div style="left:354px;top:475px;width:18px;height:533px;background:#f0f0f0"></div>
<div style="left:356px;top:492px;width:14px;height:480px;background:#cdcdcd"></div>
<svg style="left:358px;top:481px" width="10" height="8"><path d="M1 6L5 2L9 6" fill="none" stroke="#606060" stroke-width="1.5"/></svg>
<svg style="left:358px;top:993px" width="10" height="8"><path d="M1 2L5 6L9 2" fill="none" stroke="#606060" stroke-width="1.5"/></svg>
<div style="left:383px;top:429px;width:7px;height:590px;background:#fff"></div>
<div style="left:384px;top:429px;width:3px;height:590px;background:#6e6e6e"></div>
<div style="left:385px;top:429px;width:1px;height:590px;background:#8c8c8c"></div>
<div style="left:390px;top:431px;width:1506px;height:584px;background:#6e6e6e;border-radius:5px 5px 0 0"></div>
<div style="left:1893px;top:434px;width:1px;height:580px;background:#9a9a9a"></div>
<div style="left:391px;top:432px;width:1503px;height:581px;background:#ebebeb"></div>
<div style="left:391px;top:432px;width:1503px;height:16px;background:linear-gradient(#e8eef8,#e1e8f2);border-radius:4px 4px 0 0"></div>
<div style="left:391px;top:448px;width:1503px;height:1px;background:#8c8c8c"></div>
<div class="t" style="left:397px;top:435px;font-weight:bold;font-size:12px;color:#3c3c3c;letter-spacing:0.75px">Information</div>
<div style="left:391px;top:449px;width:1505px;height:1px;background:#fff"></div>
<div style="left:396px;top:452px;width:300px;height:23px;background:#fff;border-top:2px solid #6e6e6e;border-left:2px solid #6e6e6e;border-right:1px solid #e0e0e0;border-bottom:1px solid #e0e0e0"></div>
<div style="left:400px;top:456px;width:280px;height:16px;background:#0078d7"></div>
<div class="t" style="left:401px;top:457px;font-size:13.5px;color:#fff">Target - RGB - Gamma</div>
<div style="left:679px;top:455px;width:16px;height:18px;background:#ececec;border:1px solid #fff;border-right-color:#888;border-bottom-color:#888"></div>
<svg style="left:683px;top:461px" width="9" height="5"><path d="M0 0h8L4 4z" fill="#000"/></svg>
<div style="left:398px;top:482px;width:498px;height:528px;border:1px solid #000;background:conic-gradient(from 0deg at 50% 50%,#40ff00 0deg,#ffc000 44deg,#ff5000 68deg,#ff0000 92deg,#ff0090 137deg,#7800c4 180deg,#0000ff 224deg,#0080c0 268deg,#00c090 295deg,#00ff80 316deg,#40ff00 360deg)"></div>
<div style="left:472px;top:561px;width:350px;height:369px;background:#323537;border:1px solid #e8e8e8;border-radius:9px"></div>
<svg style="left:398px;top:482px" width="500" height="528"><ellipse cx="249.5" cy="263.5" rx="98" ry="104" fill="none" stroke="#fff" stroke-width="1.1" stroke-dasharray="2.5 1.5"/><path d="M249.5 56V471M54 263.5H445" stroke="#fff" stroke-width="1" stroke-dasharray="2 2" shape-rendering="crispEdges"/></svg>
<svg style="left:497px;top:574px" width="80" height="62"><defs><linearGradient id="nd" x1="0" y1="0" x2="1" y2="0"><stop offset="0" stop-color="#f5a800"/><stop offset="0.5" stop-color="#a09040"/><stop offset="1" stop-color="#108080"/></linearGradient></defs><path d="M19 40L32 40L21 58L18 58Z" fill="#151718" opacity="0.7"/><path d="M4 38H70V42H4z" fill="#1a1c1d" opacity="0.5"/><path d="M8 2.5h54a7 7 0 0 1 7 7v23a7 7 0 0 1-7 7H30L17 56l2-16.5H8a7 7 0 0 1-7-7v-23a7 7 0 0 1 7-7z" fill="url(#nd)" stroke="#e8c040" stroke-width="1"/></svg>
<div class="t" style="left:510px;top:589px;font-size:12px;color:#111">No data</div>
<div style="left:896px;top:482px;width:499px;height:526px;background:#fff"></div>
<div style="left:896px;top:482px;width:495px;height:522px;background:#a8a8a8"></div>
<div style="left:898px;top:484px;width:493px;height:520px;background:#6e6e6e"></div>
<div style="left:899px;top:1005px;width:493px;height:2px;background:#e0e0e0"></div>
<div style="left:900px;top:486px;width:491px;height:518px;background:linear-gradient(90deg,#1f1f1f 0%,#303030 10%,#3a3a3a 10%,#4a4a4a 20%,#545454 20%,#606060 30%,#6a6a6a 30%,#787878 40%,#7f7f7f 40%,#8d8d8d 50%,#959595 50%,#a3a3a3 60%,#aaaaaa 60%,#b8b8b8 70%,#c0c0c0 70%,#cccccc 80%,#d8d8d8 80%,#e2e2e2 90%,#ededed 90%,#fbfbfb 100%)"></div>
<svg style="left:900px;top:486px;overflow:hidden" width="491" height="518"><path d="M0.5 0V518" stroke="#0d4a4a" stroke-width="1.2"/><path d="M49.5 0V518" stroke="#0d4a4a" stroke-width="1.2"/><path d="M98.5 0V518" stroke="#0d4a4a" stroke-width="1.2"/><path d="M147.5 0V518" stroke="#0d4a4a" stroke-width="1.2"/><path d="M196.5 0V518" stroke="#0d4a4a" stroke-width="1.2"/><path d="M245.5 0V518" stroke="#0d4a4a" stroke-width="1.2"/><path d="M294.5 0V518" stroke="#0d4a4a" stroke-width="1.2"/><path d="M343.5 0V518" stroke="#0d4a4a" stroke-width="1.2"/><path d="M392.5 0V518" stroke="#0d4a4a" stroke-width="1.2"/><path d="M441.5 0V518" stroke="#0d4a4a" stroke-width="1.2"/><path d="M0 25.5H491" stroke="#0d4a4a" stroke-width="1.2"/><path d="M0 51.5H491" stroke="#0d4a4a" stroke-width="1.2"/><path d="M0 77.5H491" stroke="#0d4a4a" stroke-width="1.2"/><path d="M0 103.5H491" stroke="#0d4a4a" stroke-width="1.2"/><path d="M0 129.5H491" stroke="#0d4a4a" stroke-width="1.2"/><path d="M0 155.5H491" stroke="#0d4a4a" stroke-width="1.2"/><path d="M0 181.5H491" stroke="#0d4a4a" stroke-width="1.2"/><path d="M0 207.5H491" stroke="#0d4a4a" stroke-width="1.2"/><path d="M0 233.5H491" stroke="#0d4a4a" stroke-width="1.2"/><path d="M0 310.5H491" stroke="#0d4a4a" stroke-width="1.2"/><path d="M0 362.5H491" stroke="#0d4a4a" stroke-width="1.2"/><path d="M0 414.5H491" stroke="#0d4a4a" stroke-width="1.2"/><path d="M0 466.5H491" stroke="#0d4a4a" stroke-width="1.2"/><path d="M0 129.5H491" stroke="#fff" stroke-dasharray="3 3"/><rect x="0" y="126" width="4" height="7" fill="#fff"/><polyline points="49.5,24.0 98.6,57.0 147.7,91.0 196.8,104.0 245.9,112.0 295.0,118.0 344.1,120.0 393.2,123.0 442.3,123.0 491.4,124.0" fill="none" stroke="#ff0000" stroke-width="2.2"/><rect x="45.5" y="20.0" width="8" height="8" fill="#ff0000"/><rect x="94.6" y="53.0" width="8" height="8" fill="#ff0000"/><rect x="143.7" y="87.0" width="8" height="8" fill="#ff0000"/><rect x="192.8" y="100.0" width="8" height="8" fill="#ff0000"/><rect x="241.9" y="108.0" width="8" height="8" fill="#ff0000"/><rect x="291.0" y="114.0" width="8" height="8" fill="#ff0000"/><rect x="340.1" y="116.0" width="8" height="8" fill="#ff0000"/><rect x="389.2" y="119.0" width="8" height="8" fill="#ff0000"/><rect x="438.3" y="119.0" width="8" height="8" fill="#ff0000"/><rect x="487.4" y="120.0" width="8" height="8" fill="#ff0000"/><polyline points="49.5,15.0 98.6,48.0 147.7,82.0 196.8,100.0 245.9,113.0 295.0,120.0 344.1,122.0 393.2,125.0 442.3,126.0 491.4,129.0" fill="none" stroke="#00ff00" stroke-width="2.2"/><rect x="45.5" y="11.0" width="8" height="8" fill="#00ff00"/><rect x="94.6" y="44.0" width="8" height="8" fill="#00ff00"/><rect x="143.7" y="78.0" width="8" height="8" fill="#00ff00"/><rect x="192.8" y="96.0" width="8" height="8" fill="#00ff00"/><rect x="241.9" y="109.0" width="8" height="8" fill="#00ff00"/><rect x="291.0" y="116.0" width="8" height="8" fill="#00ff00"/><rect x="340.1" y="118.0" width="8" height="8" fill="#00ff00"/><rect x="389.2" y="121.0" width="8" height="8" fill="#00ff00"/><rect x="438.3" y="122.0" width="8" height="8" fill="#00ff00"/><rect x="487.4" y="125.0" width="8" height="8" fill="#00ff00"/><polyline points="49.5,6.0 98.6,6.0 147.7,54.0 196.8,83.0 245.9,102.0 295.0,114.0 344.1,122.0 393.2,128.0 442.3,132.0 491.4,135.0" fill="none" stroke="#0000ff" stroke-width="2.2"/><rect x="45.5" y="2.0" width="8" height="8" fill="#0000ff"/><rect x="94.6" y="2.0" width="8" height="8" fill="#0000ff"/><rect x="143.7" y="50.0" width="8" height="8" fill="#0000ff"/><rect x="192.8" y="79.0" width="8" height="8" fill="#0000ff"/><rect x="241.9" y="98.0" width="8" height="8" fill="#0000ff"/><rect x="291.0" y="110.0" width="8" height="8" fill="#0000ff"/><rect x="340.1" y="118.0" width="8" height="8" fill="#0000ff"/><rect x="389.2" y="124.0" width="8" height="8" fill="#0000ff"/><rect x="438.3" y="128.0" width="8" height="8" fill="#0000ff"/><rect x="487.4" y="131.0" width="8" height="8" fill="#0000ff"/><polyline points="49.5,490.0 98.6,442.0 147.7,444.0 196.8,454.0 245.9,466.5 295.0,484.5 344.1,497.6 393.2,504.0 442.3,490.4 491.4,483.7" fill="none" stroke="#ff00ff" stroke-width="2.2"/><rect x="45.5" y="486.0" width="8" height="8" fill="#ff00ff"/><rect x="94.6" y="438.0" width="8" height="8" fill="#ff00ff"/><rect x="143.7" y="440.0" width="8" height="8" fill="#ff00ff"/><rect x="192.8" y="450.0" width="8" height="8" fill="#ff00ff"/><rect x="241.9" y="462.5" width="8" height="8" fill="#ff00ff"/><rect x="291.0" y="480.5" width="8" height="8" fill="#ff00ff"/><rect x="340.1" y="493.6" width="8" height="8" fill="#ff00ff"/><rect x="389.2" y="500.0" width="8" height="8" fill="#ff00ff"/><rect x="438.3" y="486.4" width="8" height="8" fill="#ff00ff"/><rect x="487.4" y="479.7" width="8" height="8" fill="#ff00ff"/></svg>
<div style="left:900px;top:486px;width:491px;height:518px;overflow:hidden">
<div class="t" style="left:154px;top:2px;font-weight:bold;font-size:14.5px;color:#d8d800">Gray Scale Balance w/gamma</div>
<div class="t" style="left:3px;top:11px;font-family:'Liberation Serif',serif;font-size:13.6px;color:#e8e8e8">140%</div>
<div class="t" style="left:3px;top:37px;font-family:'Liberation Serif',serif;font-size:13.6px;color:#e8e8e8">130%</div>
<div class="t" style="left:3px;top:63px;font-family:'Liberation Serif',serif;font-size:13.6px;color:#e8e8e8">120%</div>
<div class="t" style="left:3px;top:89px;font-family:'Liberation Serif',serif;font-size:13.6px;color:#e8e8e8">110%</div>
<div class="t" style="left:3px;top:115px;font-family:'Liberation Serif',serif;font-size:13.6px;color:#e8e8e8">100%</div>
<div class="t" style="left:3px;top:141px;font-family:'Liberation Serif',serif;font-size:13.6px;color:#e8e8e8">90%</div>
<div class="t" style="left:3px;top:167px;font-family:'Liberation Serif',serif;font-size:13.6px;color:#e8e8e8">80%</div>
<div class="t" style="left:3px;top:193px;font-family:'Liberation Serif',serif;font-size:13.6px;color:#e8e8e8">70%</div>
<div class="t" style="left:3px;top:219px;font-family:'Liberation Serif',serif;font-size:13.6px;color:#e8e8e8">60%</div>
<div class="t" style="left:3px;top:296px;font-family:'Liberation Serif',serif;font-size:13.6px;color:#e8e8e8">8</div>
<div class="t" style="left:3px;top:348px;font-family:'Liberation Serif',serif;font-size:13.6px;color:#e8e8e8">6</div>
<div class="t" style="left:3px;top:400px;font-family:'Liberation Serif',serif;font-size:13.6px;color:#e8e8e8">4</div>
<div class="t" style="left:3px;top:452px;font-family:'Liberation Serif',serif;font-size:13.6px;color:#e8e8e8">2</div>
<div class="t" style="left:51.0px;top:244px;font-family:'Liberation Serif',serif;font-size:13.6px;color:#f4f4f4">10% White</div>
<div class="t" style="left:51.0px;top:503px;font-family:'Liberation Serif',serif;font-size:13.6px;color:#f4f4f4">10% White</div>
<div class="t" style="left:149.20000000000005px;top:244px;font-family:'Liberation Serif',serif;font-size:13.6px;color:#b0b0b0">30% White</div>
<div class="t" style="left:149.20000000000005px;top:503px;font-family:'Liberation Serif',serif;font-size:13.6px;color:#b0b0b0">30% White</div>
<div class="t" style="left:247.4000000000001px;top:244px;font-family:'Liberation Serif',serif;font-size:13.6px;color:#8c8c8c">50% White</div>
<div class="t" style="left:247.4000000000001px;top:503px;font-family:'Liberation Serif',serif;font-size:13.6px;color:#8c8c8c">50% White</div>
<div class="t" style="left:345.5999999999999px;top:244px;font-family:'Liberation Serif',serif;font-size:13.6px;color:#303030">70% White</div>
<div class="t" style="left:345.5999999999999px;top:503px;font-family:'Liberation Serif',serif;font-size:13.6px;color:#303030">70% White</div>
<div class="t" style="left:443.79999999999995px;top:244px;font-family:'Liberation Serif',serif;font-size:13.6px;color:#000">90% White</div>
<div class="t" style="left:443.79999999999995px;top:503px;font-family:'Liberation Serif',serif;font-size:13.6px;color:#000">90% White</div>
<div class="t" style="left:325px;top:462px;font-weight:bold;font-size:16px;color:rgba(120,120,120,0.55)">hcfr.sourceforge.net</div>
</div>
<div style="left:1394px;top:482px;width:498px;height:526px;background:#fff"></div>
<div style="left:1394px;top:482px;width:494px;height:522px;background:#a8a8a8"></div>
<div style="left:1396px;top:484px;width:492px;height:520px;background:#6e6e6e"></div>
<div style="left:1397px;top:1005px;width:492px;height:2px;background:#e0e0e0"></div>
<div style="left:1398px;top:486px;width:490px;height:518px;background:linear-gradient(90deg,#1f1f1f 0%,#303030 10%,#3a3a3a 10%,#4a4a4a 20%,#545454 20%,#606060 30%,#6a6a6a 30%,#787878 40%,#7f7f7f 40%,#8d8d8d 50%,#959595 50%,#a3a3a3 60%,#aaaaaa 60%,#b8b8b8 70%,#c0c0c0 70%,#cccccc 80%,#d8d8d8 80%,#e2e2e2 90%,#ededed 90%,#fbfbfb 100%)"></div>
<svg style="left:1398px;top:486px;overflow:hidden" width="490" height="518"><path d="M0.5 0V518" stroke="#0d4a4a" stroke-width="1.2"/><path d="M49.5 0V518" stroke="#0d4a4a" stroke-width="1.2"/><path d="M98.5 0V518" stroke="#0d4a4a" stroke-width="1.2"/><path d="M147.5 0V518" stroke="#0d4a4a" stroke-width="1.2"/><path d="M196.5 0V518" stroke="#0d4a4a" stroke-width="1.2"/><path d="M245.5 0V518" stroke="#0d4a4a" stroke-width="1.2"/><path d="M294.5 0V518" stroke="#0d4a4a" stroke-width="1.2"/><path d="M343.5 0V518" stroke="#0d4a4a" stroke-width="1.2"/><path d="M392.5 0V518" stroke="#0d4a4a" stroke-width="1.2"/><path d="M441.5 0V518" stroke="#0d4a4a" stroke-width="1.2"/><path d="M0 25.5H490" stroke="#0d4a4a" stroke-width="1.2"/><path d="M0 51.5H490" stroke="#0d4a4a" stroke-width="1.2"/><path d="M0 77.5H490" stroke="#0d4a4a" stroke-width="1.2"/><path d="M0 103.5H490" stroke="#0d4a4a" stroke-width="1.2"/><path d="M0 129.5H490" stroke="#0d4a4a" stroke-width="1.2"/><path d="M0 155.5H490" stroke="#0d4a4a" stroke-width="1.2"/><path d="M0 181.5H490" stroke="#0d4a4a" stroke-width="1.2"/><path d="M0 207.5H490" stroke="#0d4a4a" stroke-width="1.2"/><path d="M0 233.5H490" stroke="#0d4a4a" stroke-width="1.2"/><path d="M0 259.5H490" stroke="#0d4a4a" stroke-width="1.2"/><path d="M0 285.5H490" stroke="#0d4a4a" stroke-width="1.2"/><path d="M0 311.5H490" stroke="#0d4a4a" stroke-width="1.2"/><path d="M0 337.5H490" stroke="#0d4a4a" stroke-width="1.2"/><path d="M0 363.5H490" stroke="#0d4a4a" stroke-width="1.2"/><path d="M0 389.5H490" stroke="#0d4a4a" stroke-width="1.2"/><path d="M0 415.5H490" stroke="#0d4a4a" stroke-width="1.2"/><path d="M0 441.5H490" stroke="#0d4a4a" stroke-width="1.2"/><path d="M0 467.5H490" stroke="#0d4a4a" stroke-width="1.2"/><path d="M0 493.5H490" stroke="#0d4a4a" stroke-width="1.2"/><path d="M49.5 155.5H441.9000000000001" stroke="#e6e6e6" stroke-dasharray="3 3"/><rect x="44.5" y="150.0" width="10" height="10" fill="#e6e6e6"/><rect x="93.5" y="150.0" width="10" height="10" fill="#e6e6e6"/><rect x="142.6" y="150.0" width="10" height="10" fill="#e6e6e6"/><rect x="191.7" y="150.0" width="10" height="10" fill="#e6e6e6"/><rect x="240.7" y="150.0" width="10" height="10" fill="#e6e6e6"/><rect x="289.8" y="150.0" width="10" height="10" fill="#e6e6e6"/><rect x="338.8" y="150.0" width="10" height="10" fill="#e6e6e6"/><rect x="387.8" y="150.0" width="10" height="10" fill="#e6e6e6"/><rect x="436.9" y="150.0" width="10" height="10" fill="#e6e6e6"/><path d="M49.5 184.5H441.9000000000001" stroke="#00e8f0" stroke-dasharray="3 3"/><rect x="44.5" y="179.0" width="10" height="10" fill="#00e8f0"/><rect x="93.5" y="179.0" width="10" height="10" fill="#00e8f0"/><rect x="142.6" y="179.0" width="10" height="10" fill="#00e8f0"/><rect x="191.7" y="179.0" width="10" height="10" fill="#00e8f0"/><rect x="240.7" y="179.0" width="10" height="10" fill="#00e8f0"/><rect x="289.8" y="179.0" width="10" height="10" fill="#00e8f0"/><rect x="338.8" y="179.0" width="10" height="10" fill="#00e8f0"/><rect x="387.8" y="179.0" width="10" height="10" fill="#00e8f0"/><rect x="436.9" y="179.0" width="10" height="10" fill="#00e8f0"/><polyline points="49.5,198.0 98.5,200.0 147.6,191.5 196.7,184.0 245.7,178.0 294.8,174.5 343.8,173.0 392.8,168.4 441.9,167.0" fill="none" stroke="#ffff00" stroke-width="2.2"/><rect x="44.5" y="193.0" width="10" height="10" fill="#ffff00"/><rect x="93.5" y="195.0" width="10" height="10" fill="#ffff00"/><rect x="142.6" y="186.5" width="10" height="10" fill="#ffff00"/><rect x="191.7" y="179.0" width="10" height="10" fill="#ffff00"/><rect x="240.7" y="173.0" width="10" height="10" fill="#ffff00"/><rect x="289.8" y="169.5" width="10" height="10" fill="#ffff00"/><rect x="338.8" y="168.0" width="10" height="10" fill="#ffff00"/><rect x="387.8" y="163.4" width="10" height="10" fill="#ffff00"/><rect x="436.9" y="162.0" width="10" height="10" fill="#ffff00"/></svg>
<div style="left:1398px;top:486px;width:490px;height:518px;overflow:hidden">
<div class="t" style="left:206px;top:2px;font-weight:bold;font-size:14.5px;color:#d8d800">EOTF(Gamma)</div>
<div class="t" style="left:3px;top:11px;font-family:'Liberation Serif',serif;font-size:13.6px;color:#e8e8e8">2.9</div>
<div class="t" style="left:3px;top:37px;font-family:'Liberation Serif',serif;font-size:13.6px;color:#e8e8e8">2.8</div>
<div class="t" style="left:3px;top:63px;font-family:'Liberation Serif',serif;font-size:13.6px;color:#e8e8e8">2.7</div>
<div class="t" style="left:3px;top:89px;font-family:'Liberation Serif',serif;font-size:13.6px;color:#e8e8e8">2.6</div>
<div class="t" style="left:3px;top:115px;font-family:'Liberation Serif',serif;font-size:13.6px;color:#e8e8e8">2.5</div>
<div class="t" style="left:3px;top:141px;font-family:'Liberation Serif',serif;font-size:13.6px;color:#e8e8e8">2.4</div>
<div class="t" style="left:3px;top:167px;font-family:'Liberation Serif',serif;font-size:13.6px;color:#e8e8e8">2.3</div>
<div class="t" style="left:3px;top:193px;font-family:'Liberation Serif',serif;font-size:13.6px;color:#e8e8e8">2.2</div>
<div class="t" style="left:3px;top:219px;font-family:'Liberation Serif',serif;font-size:13.6px;color:#e8e8e8">2.1</div>
<div class="t" style="left:3px;top:245px;font-family:'Liberation Serif',serif;font-size:13.6px;color:#e8e8e8">2</div>
<div class="t" style="left:3px;top:271px;font-family:'Liberation Serif',serif;font-size:13.6px;color:#e8e8e8">1.9</div>
<div class="t" style="left:3px;top:297px;font-family:'Liberation Serif',serif;font-size:13.6px;color:#e8e8e8">1.8</div>
<div class="t" style="left:3px;top:323px;font-family:'Liberation Serif',serif;font-size:13.6px;color:#e8e8e8">1.7</div>
<div class="t" style="left:3px;top:349px;font-family:'Liberation Serif',serif;font-size:13.6px;color:#e8e8e8">1.6</div>
<div class="t" style="left:3px;top:375px;font-family:'Liberation Serif',serif;font-size:13.6px;color:#e8e8e8">1.5</div>
<div class="t" style="left:3px;top:401px;font-family:'Liberation Serif',serif;font-size:13.6px;color:#e8e8e8">1.4</div>
<div class="t" style="left:3px;top:427px;font-family:'Liberation Serif',serif;font-size:13.6px;color:#e8e8e8">1.3</div>
<div class="t" style="left:3px;top:453px;font-family:'Liberation Serif',serif;font-size:13.6px;color:#e8e8e8">1.2</div>
<div class="t" style="left:3px;top:479px;font-family:'Liberation Serif',serif;font-size:13.6px;color:#e8e8e8">1.1</div>
<div class="t" style="left:51.0px;top:503px;font-family:'Liberation Serif',serif;font-size:13.6px;color:#f4f4f4">10% White</div>
<div class="t" style="left:149.0999999999999px;top:503px;font-family:'Liberation Serif',serif;font-size:13.6px;color:#b0b0b0">30% White</div>
<div class="t" style="left:247.20000000000005px;top:503px;font-family:'Liberation Serif',serif;font-size:13.6px;color:#8c8c8c">50% White</div>
<div class="t" style="left:345.29999999999995px;top:503px;font-family:'Liberation Serif',serif;font-size:13.6px;color:#303030">70% White</div>
<div class="t" style="left:443.4000000000001px;top:503px;font-family:'Liberation Serif',serif;font-size:13.6px;color:#000">90% White</div>
<div class="t" style="left:325px;top:462px;font-weight:bold;font-size:16px;color:rgba(120,120,120,0.55)">hcfr.sourceforge.net</div>
</div>
<div style="left:2px;top:1015px;width:1895px;height:3px;background:#fff"></div>
<div style="left:2px;top:1018px;width:1899px;height:1px;background:#6e6e6e"></div>
<div style="left:2px;top:1019px;width:1899px;height:2px;background:#b0b0b0"></div>
<div style="left:2px;top:1021px;width:1899px;height:1px;background:#fff"></div>
<div style="left:0px;top:1022px;width:1920px;height:20px;background:#f0f0f0"></div>
<div style="left:0px;top:1020px;width:1px;height:20px;background:#a0a0a0"></div>
<div style="left:1px;top:1020px;width:1px;height:20px;background:#6e6e6e"></div>
<div style="left:18px;top:1022px;width:1825px;height:16px;background:#cdcdcd"></div>
<svg style="left:6px;top:1025px" width="8" height="10"><path d="M6 1L2 5L6 9" fill="none" stroke="#606060" stroke-width="1.5"/></svg>
<svg style="left:1886px;top:1025px" width="8" height="10"><path d="M2 1L6 5L2 9" fill="none" stroke="#606060" stroke-width="1.5"/></svg>
<div style="left:0px;top:1042px;width:1920px;height:1px;background:#000"></div>
<div style="left:0px;top:1043px;width:1920px;height:18px;background:#f0f0f0"></div>
<div style="left:2px;top:1043px;width:16px;height:17px;background:#f0f0f0;border:1px solid #505050"></div>
<svg style="left:2px;top:1044px" width="16" height="16"><path d="M4 4L11 11M11 4L4 11" stroke="#000" stroke-width="1.4"/></svg>
<div style="left:18px;top:1043px;width:17px;height:17px;background:#f0f0f0;border:1px solid #505050"></div>
<svg style="left:18px;top:1044px" width="16" height="16"><path d="M10 3L5 7.5L10 12z" fill="#000"/></svg>
<div style="left:35px;top:1043px;width:18px;height:17px;background:#f0f0f0;border:1px solid #505050"></div>
<svg style="left:35px;top:1044px" width="16" height="16"><path d="M6 3L11 7.5L6 12z" fill="#000"/></svg>
<svg style="left:0px;top:1043px" width="400" height="18"><path d="M239 0.5L247 17.5H345L353 0.5" fill="#f0f0f0" stroke="#333"/><path d="M187 0.5L195 17.5H239L247 0.5" fill="#f0f0f0" stroke="#333"/><path d="M119 0.5L127 17.5H187L195 0.5" fill="#f0f0f0" stroke="#333"/><path d="M54 0.5L62 17.5H119L127 0.5" fill="#fff" stroke="#333"/><path d="M53 0.5H353" stroke="#000"/></svg>
<div class="t" style="left:66px;top:1046px;font-weight:bold;font-size:11px">Measures</div>
<div class="t" style="left:134px;top:1047px;font-size:9.3px;color:#202020">Luminance</div>
<div class="t" style="left:200px;top:1047px;font-size:9.3px;color:#202020">Gamma</div>
<div class="t" style="left:258px;top:1047px;font-size:9.3px;color:#202020">Color temperature</div>
<svg style="left:1751px;top:1044px" width="15" height="15"><path d="M0.5 0.5h13v9l-2 4h-3l-1-3-1 3H3l-2.5-4z" fill="#7a7a10" stroke="#222"/><rect x="8" y="9" width="5" height="4" fill="#f0f020"/><rect x="2" y="2" width="8" height="5" fill="#fff"/><path d="M3 5h5l-2-2M8 4v3" stroke="#e02020" stroke-width="1.5" fill="none"/></svg>
<div style="left:1846px;top:1044px;width:13px;height:13px;background:#fff;border:1px solid #777;border-right-color:#ddd;border-bottom-color:#ddd"></div>
<div class="t" style="left:1864px;top:1045px;font-size:10.8px">Reference</div>
<div style="left:0px;top:1061px;width:1920px;height:16px;background:#e9eff8"></div>
<div class="t" style="left:3px;top:1066px;font-size:11.5px;letter-spacing:-0.2px">Ready</div>
<div style="left:1743px;top:1062px;width:75px;height:16px;border-left:1px solid #a8bcd8;border-top:1px solid #a8bcd8;border-right:1px solid #a8bcd8"></div>
<div style="left:1820px;top:1062px;width:29px;height:16px;border-left:1px solid #a8bcd8;border-top:1px solid #a8bcd8;border-right:1px solid #a8bcd8"></div>
<div class="t" style="left:1823px;top:1066px;font-size:11.2px">CAP</div>
<div style="left:1851px;top:1062px;width:34px;height:16px;border-left:1px solid #a8bcd8;border-top:1px solid #a8bcd8;border-right:1px solid #a8bcd8"></div>
<div class="t" style="left:1854px;top:1066px;font-size:11.2px">NUM</div>
<div style="left:1887px;top:1062px;width:40px;height:16px;border-left:1px solid #a8bcd8;border-top:1px solid #a8bcd8;border-right:1px solid #a8bcd8"></div>
<div style="left:0px;top:1077px;width:1920px;height:3px;background:#333"></div></body></html>
